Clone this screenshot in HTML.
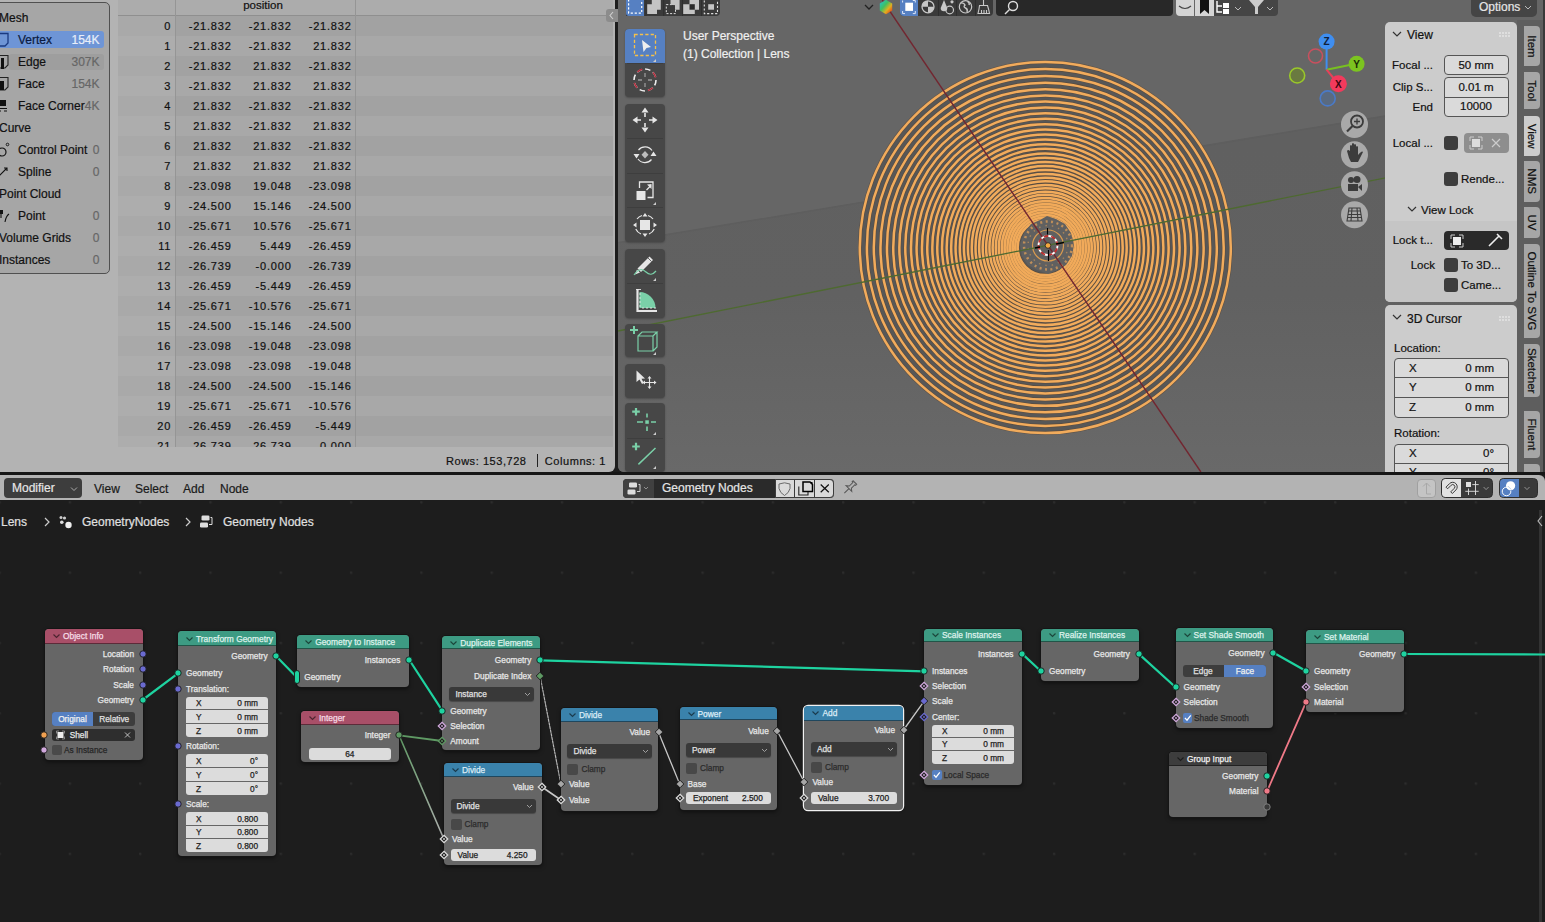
<!DOCTYPE html>
<html><head><meta charset="utf-8"><style>
html,body{margin:0;padding:0;}
body{width:1545px;height:922px;overflow:hidden;position:relative;background:#1d1d1d;font-family:"Liberation Sans", sans-serif;}
div{box-sizing:border-box;} svg{display:block;} div{-webkit-text-stroke-width:0.2px;} .ne div{-webkit-text-stroke-width:0.25px;}
</style></head><body>
<div style="position:absolute;left:0px;top:0px;width:615px;height:472px;background:#b3b3b3;overflow:hidden;border-bottom-right-radius:6px"></div><div style="position:absolute;left:118px;top:0px;width:495px;height:447px;overflow:hidden"><div style="position:absolute;left:0px;top:0px;width:495px;height:15.5px;background:#acacac;border-bottom:1px solid #8f8f8f;box-sizing:border-box"></div><div style="position:absolute;left:-55.0px;top:-2.0px;width:400px;text-align:center;line-height:14px;font-size:11.5px;color:#111;white-space:nowrap;">position</div><div style="position:absolute;left:0px;top:15.5px;width:57px;height:20px;background:#a9a9a9"></div><div style="position:absolute;left:57px;top:15.5px;width:438px;height:20px;background:#a2a2a2"></div><div style="position:absolute;left:-0.7999999999999972px;width:54px;text-align:right;top:18.5px;line-height:14px;font-size:11px;color:#111;white-space:nowrap;letter-spacing:0.8px">0</div><div style="position:absolute;left:56.599999999999994px;width:57px;text-align:right;top:18.5px;line-height:14px;font-size:11px;color:#111;white-space:nowrap;letter-spacing:0.8px">-21.832</div><div style="position:absolute;left:116.6px;width:57px;text-align:right;top:18.5px;line-height:14px;font-size:11px;color:#111;white-space:nowrap;letter-spacing:0.8px">-21.832</div><div style="position:absolute;left:176.6px;width:57px;text-align:right;top:18.5px;line-height:14px;font-size:11px;color:#111;white-space:nowrap;letter-spacing:0.8px">-21.832</div><div style="position:absolute;left:0px;top:35.5px;width:57px;height:20px;background:#adadad"></div><div style="position:absolute;left:57px;top:35.5px;width:438px;height:20px;background:#a8a8a8"></div><div style="position:absolute;left:-0.7999999999999972px;width:54px;text-align:right;top:38.5px;line-height:14px;font-size:11px;color:#111;white-space:nowrap;letter-spacing:0.8px">1</div><div style="position:absolute;left:56.599999999999994px;width:57px;text-align:right;top:38.5px;line-height:14px;font-size:11px;color:#111;white-space:nowrap;letter-spacing:0.8px">-21.832</div><div style="position:absolute;left:116.6px;width:57px;text-align:right;top:38.5px;line-height:14px;font-size:11px;color:#111;white-space:nowrap;letter-spacing:0.8px">-21.832</div><div style="position:absolute;left:176.6px;width:57px;text-align:right;top:38.5px;line-height:14px;font-size:11px;color:#111;white-space:nowrap;letter-spacing:0.8px">21.832</div><div style="position:absolute;left:0px;top:55.5px;width:57px;height:20px;background:#a9a9a9"></div><div style="position:absolute;left:57px;top:55.5px;width:438px;height:20px;background:#a2a2a2"></div><div style="position:absolute;left:-0.7999999999999972px;width:54px;text-align:right;top:58.5px;line-height:14px;font-size:11px;color:#111;white-space:nowrap;letter-spacing:0.8px">2</div><div style="position:absolute;left:56.599999999999994px;width:57px;text-align:right;top:58.5px;line-height:14px;font-size:11px;color:#111;white-space:nowrap;letter-spacing:0.8px">-21.832</div><div style="position:absolute;left:116.6px;width:57px;text-align:right;top:58.5px;line-height:14px;font-size:11px;color:#111;white-space:nowrap;letter-spacing:0.8px">21.832</div><div style="position:absolute;left:176.6px;width:57px;text-align:right;top:58.5px;line-height:14px;font-size:11px;color:#111;white-space:nowrap;letter-spacing:0.8px">-21.832</div><div style="position:absolute;left:0px;top:75.5px;width:57px;height:20px;background:#adadad"></div><div style="position:absolute;left:57px;top:75.5px;width:438px;height:20px;background:#a8a8a8"></div><div style="position:absolute;left:-0.7999999999999972px;width:54px;text-align:right;top:78.5px;line-height:14px;font-size:11px;color:#111;white-space:nowrap;letter-spacing:0.8px">3</div><div style="position:absolute;left:56.599999999999994px;width:57px;text-align:right;top:78.5px;line-height:14px;font-size:11px;color:#111;white-space:nowrap;letter-spacing:0.8px">-21.832</div><div style="position:absolute;left:116.6px;width:57px;text-align:right;top:78.5px;line-height:14px;font-size:11px;color:#111;white-space:nowrap;letter-spacing:0.8px">21.832</div><div style="position:absolute;left:176.6px;width:57px;text-align:right;top:78.5px;line-height:14px;font-size:11px;color:#111;white-space:nowrap;letter-spacing:0.8px">21.832</div><div style="position:absolute;left:0px;top:95.5px;width:57px;height:20px;background:#a9a9a9"></div><div style="position:absolute;left:57px;top:95.5px;width:438px;height:20px;background:#a2a2a2"></div><div style="position:absolute;left:-0.7999999999999972px;width:54px;text-align:right;top:98.5px;line-height:14px;font-size:11px;color:#111;white-space:nowrap;letter-spacing:0.8px">4</div><div style="position:absolute;left:56.599999999999994px;width:57px;text-align:right;top:98.5px;line-height:14px;font-size:11px;color:#111;white-space:nowrap;letter-spacing:0.8px">21.832</div><div style="position:absolute;left:116.6px;width:57px;text-align:right;top:98.5px;line-height:14px;font-size:11px;color:#111;white-space:nowrap;letter-spacing:0.8px">-21.832</div><div style="position:absolute;left:176.6px;width:57px;text-align:right;top:98.5px;line-height:14px;font-size:11px;color:#111;white-space:nowrap;letter-spacing:0.8px">-21.832</div><div style="position:absolute;left:0px;top:115.5px;width:57px;height:20px;background:#adadad"></div><div style="position:absolute;left:57px;top:115.5px;width:438px;height:20px;background:#a8a8a8"></div><div style="position:absolute;left:-0.7999999999999972px;width:54px;text-align:right;top:118.5px;line-height:14px;font-size:11px;color:#111;white-space:nowrap;letter-spacing:0.8px">5</div><div style="position:absolute;left:56.599999999999994px;width:57px;text-align:right;top:118.5px;line-height:14px;font-size:11px;color:#111;white-space:nowrap;letter-spacing:0.8px">21.832</div><div style="position:absolute;left:116.6px;width:57px;text-align:right;top:118.5px;line-height:14px;font-size:11px;color:#111;white-space:nowrap;letter-spacing:0.8px">-21.832</div><div style="position:absolute;left:176.6px;width:57px;text-align:right;top:118.5px;line-height:14px;font-size:11px;color:#111;white-space:nowrap;letter-spacing:0.8px">21.832</div><div style="position:absolute;left:0px;top:135.5px;width:57px;height:20px;background:#a9a9a9"></div><div style="position:absolute;left:57px;top:135.5px;width:438px;height:20px;background:#a2a2a2"></div><div style="position:absolute;left:-0.7999999999999972px;width:54px;text-align:right;top:138.5px;line-height:14px;font-size:11px;color:#111;white-space:nowrap;letter-spacing:0.8px">6</div><div style="position:absolute;left:56.599999999999994px;width:57px;text-align:right;top:138.5px;line-height:14px;font-size:11px;color:#111;white-space:nowrap;letter-spacing:0.8px">21.832</div><div style="position:absolute;left:116.6px;width:57px;text-align:right;top:138.5px;line-height:14px;font-size:11px;color:#111;white-space:nowrap;letter-spacing:0.8px">21.832</div><div style="position:absolute;left:176.6px;width:57px;text-align:right;top:138.5px;line-height:14px;font-size:11px;color:#111;white-space:nowrap;letter-spacing:0.8px">-21.832</div><div style="position:absolute;left:0px;top:155.5px;width:57px;height:20px;background:#adadad"></div><div style="position:absolute;left:57px;top:155.5px;width:438px;height:20px;background:#a8a8a8"></div><div style="position:absolute;left:-0.7999999999999972px;width:54px;text-align:right;top:158.5px;line-height:14px;font-size:11px;color:#111;white-space:nowrap;letter-spacing:0.8px">7</div><div style="position:absolute;left:56.599999999999994px;width:57px;text-align:right;top:158.5px;line-height:14px;font-size:11px;color:#111;white-space:nowrap;letter-spacing:0.8px">21.832</div><div style="position:absolute;left:116.6px;width:57px;text-align:right;top:158.5px;line-height:14px;font-size:11px;color:#111;white-space:nowrap;letter-spacing:0.8px">21.832</div><div style="position:absolute;left:176.6px;width:57px;text-align:right;top:158.5px;line-height:14px;font-size:11px;color:#111;white-space:nowrap;letter-spacing:0.8px">21.832</div><div style="position:absolute;left:0px;top:175.5px;width:57px;height:20px;background:#a9a9a9"></div><div style="position:absolute;left:57px;top:175.5px;width:438px;height:20px;background:#a2a2a2"></div><div style="position:absolute;left:-0.7999999999999972px;width:54px;text-align:right;top:178.5px;line-height:14px;font-size:11px;color:#111;white-space:nowrap;letter-spacing:0.8px">8</div><div style="position:absolute;left:56.599999999999994px;width:57px;text-align:right;top:178.5px;line-height:14px;font-size:11px;color:#111;white-space:nowrap;letter-spacing:0.8px">-23.098</div><div style="position:absolute;left:116.6px;width:57px;text-align:right;top:178.5px;line-height:14px;font-size:11px;color:#111;white-space:nowrap;letter-spacing:0.8px">19.048</div><div style="position:absolute;left:176.6px;width:57px;text-align:right;top:178.5px;line-height:14px;font-size:11px;color:#111;white-space:nowrap;letter-spacing:0.8px">-23.098</div><div style="position:absolute;left:0px;top:195.5px;width:57px;height:20px;background:#adadad"></div><div style="position:absolute;left:57px;top:195.5px;width:438px;height:20px;background:#a8a8a8"></div><div style="position:absolute;left:-0.7999999999999972px;width:54px;text-align:right;top:198.5px;line-height:14px;font-size:11px;color:#111;white-space:nowrap;letter-spacing:0.8px">9</div><div style="position:absolute;left:56.599999999999994px;width:57px;text-align:right;top:198.5px;line-height:14px;font-size:11px;color:#111;white-space:nowrap;letter-spacing:0.8px">-24.500</div><div style="position:absolute;left:116.6px;width:57px;text-align:right;top:198.5px;line-height:14px;font-size:11px;color:#111;white-space:nowrap;letter-spacing:0.8px">15.146</div><div style="position:absolute;left:176.6px;width:57px;text-align:right;top:198.5px;line-height:14px;font-size:11px;color:#111;white-space:nowrap;letter-spacing:0.8px">-24.500</div><div style="position:absolute;left:0px;top:215.5px;width:57px;height:20px;background:#a9a9a9"></div><div style="position:absolute;left:57px;top:215.5px;width:438px;height:20px;background:#a2a2a2"></div><div style="position:absolute;left:-0.7999999999999972px;width:54px;text-align:right;top:218.5px;line-height:14px;font-size:11px;color:#111;white-space:nowrap;letter-spacing:0.8px">10</div><div style="position:absolute;left:56.599999999999994px;width:57px;text-align:right;top:218.5px;line-height:14px;font-size:11px;color:#111;white-space:nowrap;letter-spacing:0.8px">-25.671</div><div style="position:absolute;left:116.6px;width:57px;text-align:right;top:218.5px;line-height:14px;font-size:11px;color:#111;white-space:nowrap;letter-spacing:0.8px">10.576</div><div style="position:absolute;left:176.6px;width:57px;text-align:right;top:218.5px;line-height:14px;font-size:11px;color:#111;white-space:nowrap;letter-spacing:0.8px">-25.671</div><div style="position:absolute;left:0px;top:235.5px;width:57px;height:20px;background:#adadad"></div><div style="position:absolute;left:57px;top:235.5px;width:438px;height:20px;background:#a8a8a8"></div><div style="position:absolute;left:-0.7999999999999972px;width:54px;text-align:right;top:238.5px;line-height:14px;font-size:11px;color:#111;white-space:nowrap;letter-spacing:0.8px">11</div><div style="position:absolute;left:56.599999999999994px;width:57px;text-align:right;top:238.5px;line-height:14px;font-size:11px;color:#111;white-space:nowrap;letter-spacing:0.8px">-26.459</div><div style="position:absolute;left:116.6px;width:57px;text-align:right;top:238.5px;line-height:14px;font-size:11px;color:#111;white-space:nowrap;letter-spacing:0.8px">5.449</div><div style="position:absolute;left:176.6px;width:57px;text-align:right;top:238.5px;line-height:14px;font-size:11px;color:#111;white-space:nowrap;letter-spacing:0.8px">-26.459</div><div style="position:absolute;left:0px;top:255.5px;width:57px;height:20px;background:#a9a9a9"></div><div style="position:absolute;left:57px;top:255.5px;width:438px;height:20px;background:#a2a2a2"></div><div style="position:absolute;left:-0.7999999999999972px;width:54px;text-align:right;top:258.5px;line-height:14px;font-size:11px;color:#111;white-space:nowrap;letter-spacing:0.8px">12</div><div style="position:absolute;left:56.599999999999994px;width:57px;text-align:right;top:258.5px;line-height:14px;font-size:11px;color:#111;white-space:nowrap;letter-spacing:0.8px">-26.739</div><div style="position:absolute;left:116.6px;width:57px;text-align:right;top:258.5px;line-height:14px;font-size:11px;color:#111;white-space:nowrap;letter-spacing:0.8px">-0.000</div><div style="position:absolute;left:176.6px;width:57px;text-align:right;top:258.5px;line-height:14px;font-size:11px;color:#111;white-space:nowrap;letter-spacing:0.8px">-26.739</div><div style="position:absolute;left:0px;top:275.5px;width:57px;height:20px;background:#adadad"></div><div style="position:absolute;left:57px;top:275.5px;width:438px;height:20px;background:#a8a8a8"></div><div style="position:absolute;left:-0.7999999999999972px;width:54px;text-align:right;top:278.5px;line-height:14px;font-size:11px;color:#111;white-space:nowrap;letter-spacing:0.8px">13</div><div style="position:absolute;left:56.599999999999994px;width:57px;text-align:right;top:278.5px;line-height:14px;font-size:11px;color:#111;white-space:nowrap;letter-spacing:0.8px">-26.459</div><div style="position:absolute;left:116.6px;width:57px;text-align:right;top:278.5px;line-height:14px;font-size:11px;color:#111;white-space:nowrap;letter-spacing:0.8px">-5.449</div><div style="position:absolute;left:176.6px;width:57px;text-align:right;top:278.5px;line-height:14px;font-size:11px;color:#111;white-space:nowrap;letter-spacing:0.8px">-26.459</div><div style="position:absolute;left:0px;top:295.5px;width:57px;height:20px;background:#a9a9a9"></div><div style="position:absolute;left:57px;top:295.5px;width:438px;height:20px;background:#a2a2a2"></div><div style="position:absolute;left:-0.7999999999999972px;width:54px;text-align:right;top:298.5px;line-height:14px;font-size:11px;color:#111;white-space:nowrap;letter-spacing:0.8px">14</div><div style="position:absolute;left:56.599999999999994px;width:57px;text-align:right;top:298.5px;line-height:14px;font-size:11px;color:#111;white-space:nowrap;letter-spacing:0.8px">-25.671</div><div style="position:absolute;left:116.6px;width:57px;text-align:right;top:298.5px;line-height:14px;font-size:11px;color:#111;white-space:nowrap;letter-spacing:0.8px">-10.576</div><div style="position:absolute;left:176.6px;width:57px;text-align:right;top:298.5px;line-height:14px;font-size:11px;color:#111;white-space:nowrap;letter-spacing:0.8px">-25.671</div><div style="position:absolute;left:0px;top:315.5px;width:57px;height:20px;background:#adadad"></div><div style="position:absolute;left:57px;top:315.5px;width:438px;height:20px;background:#a8a8a8"></div><div style="position:absolute;left:-0.7999999999999972px;width:54px;text-align:right;top:318.5px;line-height:14px;font-size:11px;color:#111;white-space:nowrap;letter-spacing:0.8px">15</div><div style="position:absolute;left:56.599999999999994px;width:57px;text-align:right;top:318.5px;line-height:14px;font-size:11px;color:#111;white-space:nowrap;letter-spacing:0.8px">-24.500</div><div style="position:absolute;left:116.6px;width:57px;text-align:right;top:318.5px;line-height:14px;font-size:11px;color:#111;white-space:nowrap;letter-spacing:0.8px">-15.146</div><div style="position:absolute;left:176.6px;width:57px;text-align:right;top:318.5px;line-height:14px;font-size:11px;color:#111;white-space:nowrap;letter-spacing:0.8px">-24.500</div><div style="position:absolute;left:0px;top:335.5px;width:57px;height:20px;background:#a9a9a9"></div><div style="position:absolute;left:57px;top:335.5px;width:438px;height:20px;background:#a2a2a2"></div><div style="position:absolute;left:-0.7999999999999972px;width:54px;text-align:right;top:338.5px;line-height:14px;font-size:11px;color:#111;white-space:nowrap;letter-spacing:0.8px">16</div><div style="position:absolute;left:56.599999999999994px;width:57px;text-align:right;top:338.5px;line-height:14px;font-size:11px;color:#111;white-space:nowrap;letter-spacing:0.8px">-23.098</div><div style="position:absolute;left:116.6px;width:57px;text-align:right;top:338.5px;line-height:14px;font-size:11px;color:#111;white-space:nowrap;letter-spacing:0.8px">-19.048</div><div style="position:absolute;left:176.6px;width:57px;text-align:right;top:338.5px;line-height:14px;font-size:11px;color:#111;white-space:nowrap;letter-spacing:0.8px">-23.098</div><div style="position:absolute;left:0px;top:355.5px;width:57px;height:20px;background:#adadad"></div><div style="position:absolute;left:57px;top:355.5px;width:438px;height:20px;background:#a8a8a8"></div><div style="position:absolute;left:-0.7999999999999972px;width:54px;text-align:right;top:358.5px;line-height:14px;font-size:11px;color:#111;white-space:nowrap;letter-spacing:0.8px">17</div><div style="position:absolute;left:56.599999999999994px;width:57px;text-align:right;top:358.5px;line-height:14px;font-size:11px;color:#111;white-space:nowrap;letter-spacing:0.8px">-23.098</div><div style="position:absolute;left:116.6px;width:57px;text-align:right;top:358.5px;line-height:14px;font-size:11px;color:#111;white-space:nowrap;letter-spacing:0.8px">-23.098</div><div style="position:absolute;left:176.6px;width:57px;text-align:right;top:358.5px;line-height:14px;font-size:11px;color:#111;white-space:nowrap;letter-spacing:0.8px">-19.048</div><div style="position:absolute;left:0px;top:375.5px;width:57px;height:20px;background:#a9a9a9"></div><div style="position:absolute;left:57px;top:375.5px;width:438px;height:20px;background:#a2a2a2"></div><div style="position:absolute;left:-0.7999999999999972px;width:54px;text-align:right;top:378.5px;line-height:14px;font-size:11px;color:#111;white-space:nowrap;letter-spacing:0.8px">18</div><div style="position:absolute;left:56.599999999999994px;width:57px;text-align:right;top:378.5px;line-height:14px;font-size:11px;color:#111;white-space:nowrap;letter-spacing:0.8px">-24.500</div><div style="position:absolute;left:116.6px;width:57px;text-align:right;top:378.5px;line-height:14px;font-size:11px;color:#111;white-space:nowrap;letter-spacing:0.8px">-24.500</div><div style="position:absolute;left:176.6px;width:57px;text-align:right;top:378.5px;line-height:14px;font-size:11px;color:#111;white-space:nowrap;letter-spacing:0.8px">-15.146</div><div style="position:absolute;left:0px;top:395.5px;width:57px;height:20px;background:#adadad"></div><div style="position:absolute;left:57px;top:395.5px;width:438px;height:20px;background:#a8a8a8"></div><div style="position:absolute;left:-0.7999999999999972px;width:54px;text-align:right;top:398.5px;line-height:14px;font-size:11px;color:#111;white-space:nowrap;letter-spacing:0.8px">19</div><div style="position:absolute;left:56.599999999999994px;width:57px;text-align:right;top:398.5px;line-height:14px;font-size:11px;color:#111;white-space:nowrap;letter-spacing:0.8px">-25.671</div><div style="position:absolute;left:116.6px;width:57px;text-align:right;top:398.5px;line-height:14px;font-size:11px;color:#111;white-space:nowrap;letter-spacing:0.8px">-25.671</div><div style="position:absolute;left:176.6px;width:57px;text-align:right;top:398.5px;line-height:14px;font-size:11px;color:#111;white-space:nowrap;letter-spacing:0.8px">-10.576</div><div style="position:absolute;left:0px;top:415.5px;width:57px;height:20px;background:#a9a9a9"></div><div style="position:absolute;left:57px;top:415.5px;width:438px;height:20px;background:#a2a2a2"></div><div style="position:absolute;left:-0.7999999999999972px;width:54px;text-align:right;top:418.5px;line-height:14px;font-size:11px;color:#111;white-space:nowrap;letter-spacing:0.8px">20</div><div style="position:absolute;left:56.599999999999994px;width:57px;text-align:right;top:418.5px;line-height:14px;font-size:11px;color:#111;white-space:nowrap;letter-spacing:0.8px">-26.459</div><div style="position:absolute;left:116.6px;width:57px;text-align:right;top:418.5px;line-height:14px;font-size:11px;color:#111;white-space:nowrap;letter-spacing:0.8px">-26.459</div><div style="position:absolute;left:176.6px;width:57px;text-align:right;top:418.5px;line-height:14px;font-size:11px;color:#111;white-space:nowrap;letter-spacing:0.8px">-5.449</div><div style="position:absolute;left:0px;top:435.5px;width:57px;height:20px;background:#adadad"></div><div style="position:absolute;left:57px;top:435.5px;width:438px;height:20px;background:#a8a8a8"></div><div style="position:absolute;left:-0.7999999999999972px;width:54px;text-align:right;top:438.5px;line-height:14px;font-size:11px;color:#111;white-space:nowrap;letter-spacing:0.8px">21</div><div style="position:absolute;left:56.599999999999994px;width:57px;text-align:right;top:438.5px;line-height:14px;font-size:11px;color:#111;white-space:nowrap;letter-spacing:0.8px">-26.739</div><div style="position:absolute;left:116.6px;width:57px;text-align:right;top:438.5px;line-height:14px;font-size:11px;color:#111;white-space:nowrap;letter-spacing:0.8px">-26.739</div><div style="position:absolute;left:176.6px;width:57px;text-align:right;top:438.5px;line-height:14px;font-size:11px;color:#111;white-space:nowrap;letter-spacing:0.8px">0.000</div><div style="position:absolute;left:57px;top:0px;width:1px;height:447px;background:#959595"></div><div style="position:absolute;left:237px;top:0px;width:1px;height:447px;background:#959595"></div></div><div style="position:absolute;left:406.5px;width:120px;text-align:right;top:453.5px;line-height:14px;font-size:11px;color:#111;white-space:nowrap;letter-spacing:0.55px">Rows: 153,728</div><div style="position:absolute;left:537px;top:454px;width:1.3px;height:12.5px;background:#222"></div><div style="position:absolute;left:486px;width:120px;text-align:right;top:453.5px;line-height:14px;font-size:11px;color:#111;white-space:nowrap;letter-spacing:0.55px">Columns: 1</div><div style="position:absolute;left:0px;top:0px;width:115px;height:280px;overflow:hidden"><div style="position:absolute;left:-6px;top:2px;width:115.5px;height:272px;background:#a6a6a6;border:1px solid #505050;border-radius:5px;box-sizing:border-box"></div><div style="position:absolute;left:-1px;top:11.0px;line-height:14px;font-size:12px;color:#111;white-space:nowrap;">Mesh</div><div style="position:absolute;left:-2px;top:31px;width:106px;height:17px;background:#6e95d6;border-radius:3px"></div><div style="position:absolute;left:18px;top:33.0px;line-height:14px;font-size:12px;color:#0a1a40;white-space:nowrap;">Vertex</div><div style="position:absolute;left:59.5px;width:40px;text-align:right;top:33.0px;line-height:14px;font-size:12px;color:#e8eefa;white-space:nowrap;">154K</div><div style="position:absolute;left:9px;top:53.5px;width:95px;height:16.5px;background:#9e9e9e;border-radius:3px"></div><div style="position:absolute;left:18px;top:55.0px;line-height:14px;font-size:12px;color:#111;white-space:nowrap;">Edge</div><div style="position:absolute;left:59.5px;width:40px;text-align:right;top:55.0px;line-height:14px;font-size:12px;color:#666;white-space:nowrap;">307K</div><div style="position:absolute;left:18px;top:77.0px;line-height:14px;font-size:12px;color:#111;white-space:nowrap;">Face</div><div style="position:absolute;left:59.5px;width:40px;text-align:right;top:77.0px;line-height:14px;font-size:12px;color:#666;white-space:nowrap;">154K</div><div style="position:absolute;left:18px;top:99.0px;line-height:14px;font-size:12px;color:#111;white-space:nowrap;">Face Corner</div><div style="position:absolute;left:59.5px;width:40px;text-align:right;top:99.0px;line-height:14px;font-size:12px;color:#666;white-space:nowrap;">4K</div><div style="position:absolute;left:-1px;top:121.0px;line-height:14px;font-size:12px;color:#111;white-space:nowrap;">Curve</div><div style="position:absolute;left:18px;top:143.0px;line-height:14px;font-size:12px;color:#111;white-space:nowrap;">Control Point</div><div style="position:absolute;left:59.5px;width:40px;text-align:right;top:143.0px;line-height:14px;font-size:12px;color:#666;white-space:nowrap;">0</div><div style="position:absolute;left:18px;top:165.0px;line-height:14px;font-size:12px;color:#111;white-space:nowrap;">Spline</div><div style="position:absolute;left:59.5px;width:40px;text-align:right;top:165.0px;line-height:14px;font-size:12px;color:#666;white-space:nowrap;">0</div><div style="position:absolute;left:-1px;top:187.0px;line-height:14px;font-size:12px;color:#111;white-space:nowrap;">Point Cloud</div><div style="position:absolute;left:18px;top:209.0px;line-height:14px;font-size:12px;color:#111;white-space:nowrap;">Point</div><div style="position:absolute;left:59.5px;width:40px;text-align:right;top:209.0px;line-height:14px;font-size:12px;color:#666;white-space:nowrap;">0</div><div style="position:absolute;left:-1px;top:231.0px;line-height:14px;font-size:12px;color:#111;white-space:nowrap;">Volume Grids</div><div style="position:absolute;left:59.5px;width:40px;text-align:right;top:231.0px;line-height:14px;font-size:12px;color:#666;white-space:nowrap;">0</div><div style="position:absolute;left:-1px;top:253.0px;line-height:14px;font-size:12px;color:#111;white-space:nowrap;">Instances</div><div style="position:absolute;left:59.5px;width:40px;text-align:right;top:253.0px;line-height:14px;font-size:12px;color:#666;white-space:nowrap;">0</div><svg width="20" height="280" style="position:absolute;left:0;top:0">
<path d="M-3,33.5 L8,33.5 L8,43 L5,46 L-3,46" fill="none" stroke="#1a3a80" stroke-width="1.3"/>
<path d="M-3,55.5 L8,55.5 L8,65 L5,68 L-3,68" fill="none" stroke="#222" stroke-width="1.1"/><rect x="1" y="58" width="3" height="11" fill="#111"/>
<path d="M-3,77.5 L8,77.5 L8,87 L5,90 L-3,90" fill="none" stroke="#222" stroke-width="1.1"/><rect x="-3" y="81" width="7" height="9" fill="#111"/>
<rect x="0" y="100" width="6" height="6" fill="#111"/><path d="M-1,108.5 L7,108.5 M-1,111 L1,111 M4,111 L7,111" stroke="#111" stroke-width="1"/>
<circle cx="2" cy="152" r="4" fill="none" stroke="#111" stroke-width="1.2"/><circle cx="7.5" cy="144.5" r="1.3" fill="none" stroke="#111" stroke-width="0.9"/>
<path d="M-1,176 L7,168 M4,168 L7,168 L7,171" fill="none" stroke="#111" stroke-width="1.1"/>
<rect x="-1" y="210" width="4" height="4" fill="#111"/><path d="M1,214 L1,218 M5,222 Q6,216 9,214" fill="none" stroke="#111" stroke-width="1.1"/>
</svg></div><div style="position:absolute;left:606px;top:9px;width:12px;height:13px;background:#8c8c8c;border-radius:3px 0 0 3px"><svg width="12" height="13"><polyline points="7,3 4,6.5 7,10" fill="none" stroke="#d0d0d0" stroke-width="1.1"/></svg></div><div style="position:absolute;left:618px;top:0px;width:927px;height:472px;overflow:hidden;border-bottom-left-radius:6px;border-top-left-radius:0"><div style="position:absolute;left:0px;top:0px;width:927px;height:472px;background:#666666"></div><svg width="927" height="472" style="position:absolute;left:0;top:0"><defs><linearGradient id="vpg" x1="0" y1="150" x2="0" y2="472" gradientUnits="userSpaceOnUse"><stop offset="0" stop-color="#606060"/><stop offset="0.45" stop-color="#616161"/><stop offset="1" stop-color="#696969"/></linearGradient></defs><polygon points="0,242.2 927,89 927,472 0,472" fill="url(#vpg)"/><line x1="0" y1="242.7" x2="927" y2="89.5" stroke="#5e5e5e" stroke-width="1.5"/></svg></div><svg width="1545" height="472" style="position:absolute;left:0;top:0">
<circle cx="1045.3" cy="247.5" r="185" fill="#575757"/>
<g fill="none" stroke="#5a4028" stroke-width="3.6" opacity="0.5"><circle cx="1045.3" cy="247.5" r="185.50" /><circle cx="1045.3" cy="247.5" r="178.40" /><circle cx="1045.3" cy="247.5" r="171.51" /><circle cx="1045.3" cy="247.5" r="164.83" /><circle cx="1045.3" cy="247.5" r="158.34" /><circle cx="1045.3" cy="247.5" r="152.05" /><circle cx="1045.3" cy="247.5" r="145.95" /><circle cx="1045.3" cy="247.5" r="140.03" /><circle cx="1045.3" cy="247.5" r="134.29" /><circle cx="1045.3" cy="247.5" r="128.72" /><circle cx="1045.3" cy="247.5" r="123.32" /><circle cx="1045.3" cy="247.5" r="118.07" /><circle cx="1045.3" cy="247.5" r="112.99" /><circle cx="1045.3" cy="247.5" r="108.06" /><circle cx="1045.3" cy="247.5" r="103.27" /><circle cx="1045.3" cy="247.5" r="98.63" /><circle cx="1045.3" cy="247.5" r="94.12" /><circle cx="1045.3" cy="247.5" r="89.75" /><circle cx="1045.3" cy="247.5" r="85.52" /><circle cx="1045.3" cy="247.5" r="81.40" /><circle cx="1045.3" cy="247.5" r="77.41" /><circle cx="1045.3" cy="247.5" r="73.54" /><circle cx="1045.3" cy="247.5" r="69.79" /><circle cx="1045.3" cy="247.5" r="66.15" /><circle cx="1045.3" cy="247.5" r="62.62" /><circle cx="1045.3" cy="247.5" r="59.19" /><circle cx="1045.3" cy="247.5" r="55.86" /><circle cx="1045.3" cy="247.5" r="52.64" /><circle cx="1045.3" cy="247.5" r="49.51" /><circle cx="1045.3" cy="247.5" r="46.47" /><circle cx="1045.3" cy="247.5" r="43.53" /><circle cx="1045.3" cy="247.5" r="40.67" /><circle cx="1045.3" cy="247.5" r="37.90" /><circle cx="1045.3" cy="247.5" r="35.21" /><circle cx="1045.3" cy="247.5" r="32.61" /><circle cx="1045.3" cy="247.5" r="30.08" /><circle cx="1045.3" cy="247.5" r="27.62" /></g>
<g fill="none" stroke="#f1ab5c" stroke-width="2.5"><circle cx="1045.3" cy="247.5" r="185.50" /><circle cx="1045.3" cy="247.5" r="178.40" /><circle cx="1045.3" cy="247.5" r="171.51" /><circle cx="1045.3" cy="247.5" r="164.83" /><circle cx="1045.3" cy="247.5" r="158.34" /><circle cx="1045.3" cy="247.5" r="152.05" /><circle cx="1045.3" cy="247.5" r="145.95" /><circle cx="1045.3" cy="247.5" r="140.03" /><circle cx="1045.3" cy="247.5" r="134.29" /><circle cx="1045.3" cy="247.5" r="128.72" /><circle cx="1045.3" cy="247.5" r="123.32" /><circle cx="1045.3" cy="247.5" r="118.07" /><circle cx="1045.3" cy="247.5" r="112.99" /><circle cx="1045.3" cy="247.5" r="108.06" /><circle cx="1045.3" cy="247.5" r="103.27" /><circle cx="1045.3" cy="247.5" r="98.63" /><circle cx="1045.3" cy="247.5" r="94.12" /><circle cx="1045.3" cy="247.5" r="89.75" /><circle cx="1045.3" cy="247.5" r="85.52" /><circle cx="1045.3" cy="247.5" r="81.40" /><circle cx="1045.3" cy="247.5" r="77.41" /><circle cx="1045.3" cy="247.5" r="73.54" /><circle cx="1045.3" cy="247.5" r="69.79" /><circle cx="1045.3" cy="247.5" r="66.15" /><circle cx="1045.3" cy="247.5" r="62.62" /><circle cx="1045.3" cy="247.5" r="59.19" /><circle cx="1045.3" cy="247.5" r="55.86" /><circle cx="1045.3" cy="247.5" r="52.64" /><circle cx="1045.3" cy="247.5" r="49.51" /><circle cx="1045.3" cy="247.5" r="46.47" /><circle cx="1045.3" cy="247.5" r="43.53" /><circle cx="1045.3" cy="247.5" r="40.67" /><circle cx="1045.3" cy="247.5" r="37.90" /><circle cx="1045.3" cy="247.5" r="35.21" /><circle cx="1045.3" cy="247.5" r="32.61" /><circle cx="1045.3" cy="247.5" r="30.08" /><circle cx="1045.3" cy="247.5" r="27.62" /></g>
<circle cx="1047.5" cy="246" r="37" fill="none" stroke="#f0a855" stroke-width="16" opacity="0.35"/>
<polygon points="1024,233 1031,224 1040,220 1047,216 1056,219 1065,224 1071,233 1074,245 1072,256 1066,265 1058,270 1048,274 1037,270 1028,265 1022,256 1020,245" fill="#606060"/>
<circle cx="1048" cy="245.5" r="24" fill="none" stroke="#e8a458" stroke-width="2.5" stroke-dasharray="2 3.5" opacity="0.7"/>
<circle cx="1048" cy="245.5" r="20" fill="none" stroke="#e8a458" stroke-width="1.5" stroke-dasharray="1.5 5" opacity="0.5"/>
<circle cx="1048" cy="245.5" r="15.5" fill="none" stroke="#d89a50" stroke-width="1.2"/>
<line x1="882.3" y1="0" x2="1200.9" y2="472" stroke="#722630" stroke-width="1.4"/>
<line x1="618" y1="331" x2="1545" y2="146" stroke="#4e6a30" stroke-width="1.3"/>
<circle cx="1048" cy="245.5" r="9.5" fill="none" stroke="#fff" stroke-width="1.8" stroke-dasharray="4.5 2.95"/>
<circle cx="1048" cy="245.5" r="9.5" fill="none" stroke="#c03030" stroke-width="1.8" stroke-dasharray="4.5 2.95" stroke-dashoffset="4.5"/>
<line x1="1047.5" y1="228" x2="1047.5" y2="234.5" stroke="#000" stroke-width="1.1"/>
<line x1="1048.5" y1="250" x2="1048.5" y2="261" stroke="#000" stroke-width="1.1"/>
<line x1="1035" y1="248" x2="1040" y2="247" stroke="#000" stroke-width="1.3"/>
<line x1="1056" y1="244" x2="1064" y2="242.5" stroke="#000" stroke-width="1.3"/>
<circle cx="1048" cy="245.5" r="2.8" fill="#f5a840" stroke="#222" stroke-width="0.8"/>
</svg><svg width="100" height="18" style="position:absolute;left:622px;top:0"><path d="M4,0 L98,0 L98,12 Q98,16 94,16 L4,16 Q4,16 4,16 Z" fill="#3a3a3a"/><path d="M4,0 L22,0 L22,16 L7,16 Q4,16 4,13 Z" fill="#5680c2"/><rect x="6.6" y="-1" width="13.1" height="14.1" fill="none" stroke="#fff" stroke-width="1.2" stroke-dasharray="2.2 1.8"/><path d="M24,0 L24,16 M41.7,0 L41.7,16 M60.5,0 L60.5,16 M79.5,0 L79.5,16" stroke="#2e2e2e" stroke-width="1"/><path d="M25.2,4.2 L29.8,4.2 L29.8,0 L38.8,0 L38.8,9.7 L35,9.7 L35,13.9 L25.2,13.9 Z" fill="#c4c4c4"/><rect x="44.3" y="4.6" width="9.2" height="9" fill="none" stroke="#ddd" stroke-width="1" stroke-dasharray="2 1.6"/><path d="M48.5,0 L57.6,0 L57.6,9.7 L53,9.7 L53,4.9 L48.5,4.9 Z" fill="#c4c4c4"/><path d="M67.5,0 L77,0 L77,9.7 L72.8,9.7 L72.8,13.9 L61.2,13.9 L61.2,4.2 L67.5,4.2 Z" fill="#c4c4c4"/><rect x="67.5" y="4.2" width="5.3" height="5.5" fill="#2a2a2a"/><rect x="82.3" y="-1" width="13.2" height="14.6" fill="none" stroke="#ddd" stroke-width="1.1" stroke-dasharray="2.2 1.8"/><rect x="86.2" y="4.2" width="5.8" height="5.5" fill="#c4c4c4"/></svg><svg width="20" height="12" style="position:absolute;left:862px;top:2px"><polyline points="3,3 7,7 11,3" fill="none" stroke="#222" stroke-width="1.3"/></svg><svg width="16" height="16" style="position:absolute;left:878px;top:-1px"><defs><linearGradient id="hexg" x1="0" y1="0" x2="1" y2="1"><stop offset="0" stop-color="#20c0e0"/><stop offset="0.4" stop-color="#40c060"/><stop offset="0.65" stop-color="#e0b020"/><stop offset="1" stop-color="#f02010"/></linearGradient></defs><polygon points="8,0.8 14.2,4.4 14.2,11.6 8,15.2 1.8,11.6 1.8,4.4" fill="url(#hexg)"/></svg><svg width="96" height="17" style="position:absolute;left:899px;top:0"><path d="M1,0 L94,0 L94,12 Q94,16 90,16 L5,16 Q1,16 1,12 Z" fill="#3a3a3a"/><path d="M1,0 L19,0 L19,16 L5,16 Q1,16 1,12 Z" fill="#5680c2"/><rect x="6.3" y="2.7" width="7.7" height="8.2" fill="#fff"/><path d="M3.6,2.5 L3.6,0.5 M13.8,0.5 L16.3,0.5 L16.3,2.5 M16.3,11 L16.3,13.6 L13.8,13.6 M6,13.6 L3.6,13.6 L3.6,11" fill="none" stroke="#dde6f8" stroke-width="1"/><path d="M39.5,0 L39.5,16 M57.5,0 L57.5,16 M76.5,0 L76.5,16" stroke="#2e2e2e" stroke-width="1"/><circle cx="29" cy="6.8" r="6" fill="none" stroke="#c8c8c8" stroke-width="1.3"/><path d="M29,6.8 L35,6.8 A6,6 0 0 1 29,12.8 Z M29,6.8 L23,6.8 A6,6 0 0 1 29,0.8 Z" fill="#c8c8c8"/><path d="M45,0 L48.3,8 A3.3,3.3 0 0 1 41.7,8 Z" fill="#c8c8c8"/><circle cx="50.7" cy="10" r="3.8" fill="none" stroke="#c8c8c8" stroke-width="1.2"/><circle cx="53" cy="1.8" r="1.6" fill="#c8c8c8"/><circle cx="66.5" cy="6.8" r="6.2" fill="none" stroke="#c8c8c8" stroke-width="1.2"/><path d="M62,3 Q65,2.5 66,5 Q64,7 66.5,8 Q69,9 68,12 M68.5,1.5 Q71,3 70,5" fill="none" stroke="#c8c8c8" stroke-width="1.4"/><path d="M84.5,0 L84.5,5 M80.5,5.5 L88.5,5.5 L89.5,9 L90.5,13.5 L79,13.5 L80,9 Z M82.5,10 L82.5,13.5 M85,10 L85,13.5 M87.5,10 L87.5,13.5" fill="none" stroke="#c8c8c8" stroke-width="1.1"/></svg><div style="position:absolute;left:996px;top:0px;width:177px;height:16px;background:#282828;border-radius:0 0 4px 4px"><svg width="20" height="16" style="position:absolute;left:6px;top:0"><circle cx="11" cy="6" r="4.5" fill="none" stroke="#ddd" stroke-width="1.4"/><line x1="7.5" y1="9.5" x2="3" y2="14" stroke="#ddd" stroke-width="1.4"/></svg></div><div style="position:absolute;left:1176px;top:0px;width:18px;height:16px;background:#d4d4d4;border-radius:0 0 0 4px"><svg width="18" height="16"><path d="M3,6 Q9,11 15,6" fill="none" stroke="#444" stroke-width="1.2"/></svg></div><div style="position:absolute;left:1195px;top:0px;width:19px;height:16px;background:#d4d4d4"><svg width="19" height="16"><path d="M5,0 L14,0 L14,14 L9.5,10 L5,14 Z" fill="#111"/></svg></div><div style="position:absolute;left:1214px;top:0px;width:64px;height:16px;background:#454545;border-radius:0 0 4px 0"><svg width="64" height="16"><path d="M3,1 L3,12 L8,12 M3,6 L8,6" fill="none" stroke="#fff" stroke-width="1.4"/><rect x="9" y="3" width="6" height="5" fill="#fff"/><rect x="9" y="9" width="6" height="5" fill="#fff"/><polyline points="21,7 24,10 27,7" fill="none" stroke="#bbb" stroke-width="1"/><path d="M35,0 L50,0 L44,7 L44,14 L41,14 L41,7 Z" fill="#ccc"/><polyline points="53,7 56,10 59,7" fill="none" stroke="#bbb" stroke-width="1"/></svg></div><div style="position:absolute;left:683px;top:29.0px;line-height:14px;font-size:12px;color:#f0f0f0;white-space:nowrap;">User Perspective</div><div style="position:absolute;left:683px;top:47.0px;line-height:14px;font-size:12px;color:#f0f0f0;white-space:nowrap;">(1) Collection | Lens</div><div style="position:absolute;left:625px;top:28.5px;width:40px;height:68.5px;background:#474747;border-radius:4px;box-shadow:0 1px 2px rgba(0,0,0,0.25)"></div><div style="position:absolute;left:627px;top:62.75px;width:36px;height:1px;background:#3e3e3e"></div><div style="position:absolute;left:625px;top:28.5px;width:40px;height:34px;background:#5680c2;border-radius:4px 4px 0 0"></div><div style="position:absolute;left:625px;top:103.5px;width:40px;height:138.5px;background:#474747;border-radius:4px;box-shadow:0 1px 2px rgba(0,0,0,0.25)"></div><div style="position:absolute;left:627px;top:138.125px;width:36px;height:1px;background:#3e3e3e"></div><div style="position:absolute;left:627px;top:172.75px;width:36px;height:1px;background:#3e3e3e"></div><div style="position:absolute;left:627px;top:207.375px;width:36px;height:1px;background:#3e3e3e"></div><div style="position:absolute;left:625px;top:248.5px;width:40px;height:69.5px;background:#474747;border-radius:4px;box-shadow:0 1px 2px rgba(0,0,0,0.25)"></div><div style="position:absolute;left:627px;top:283.25px;width:36px;height:1px;background:#3e3e3e"></div><div style="position:absolute;left:625px;top:323.5px;width:40px;height:33.5px;background:#474747;border-radius:4px;box-shadow:0 1px 2px rgba(0,0,0,0.25)"></div><div style="position:absolute;left:625px;top:363.5px;width:40px;height:34.0px;background:#474747;border-radius:4px;box-shadow:0 1px 2px rgba(0,0,0,0.25)"></div><div style="position:absolute;left:625px;top:403px;width:40px;height:69px;background:#474747;border-radius:4px;box-shadow:0 1px 2px rgba(0,0,0,0.25)"></div><div style="position:absolute;left:627px;top:437.5px;width:36px;height:1px;background:#3e3e3e"></div><svg width="50" height="471" style="position:absolute;left:620px;top:0">
<rect x="14.5" y="34.5" width="21" height="21" fill="none" stroke="#f5c04a" stroke-width="1.3" stroke-dasharray="3.2 2.2"/>
<path d="M22,40 L31,47 L26.5,48 L23.5,52 Z" fill="#eee"/>
<circle cx="25" cy="80" r="11" fill="none" stroke="#eee" stroke-width="1.6" stroke-dasharray="5.5 3.1"/>
<circle cx="25" cy="80" r="11" fill="none" stroke="#b02a3a" stroke-width="1.6" stroke-dasharray="5.5 11.8" stroke-dashoffset="-8.6"/>
<path d="M25,73 L25,77 M25,83 L25,87 M18,80 L22,80 M28,80 L32,80" stroke="#999" stroke-width="1.3"/>
<path d="M25,113 L25,117 M25,123 L25,127 M17,120 L21,120 M29,120 L33,120" stroke="#e6e6e6" stroke-width="1.6"/>
<path d="M25,107.5 L21.5,112.5 L28.5,112.5 Z M25,132.5 L21.5,127.5 L28.5,127.5 Z M12.5,120 L17.5,116.5 L17.5,123.5 Z M37.5,120 L32.5,116.5 L32.5,123.5 Z" fill="#e6e6e6"/>
<path d="M18.5,150 A8.5,8.5 0 0 1 32,150.5 M31.5,159.5 A8.5,8.5 0 0 1 18,159" fill="none" stroke="#e6e6e6" stroke-width="1.2"/>
<path d="M25,151 L28.5,154.8 L25,158.6 L21.5,154.8 Z" fill="#bdbdbd"/><path d="M13.5,154 L19.5,154 L16.5,158.5 Z M36.5,156 L30.5,156 L33.5,151.5 Z" fill="#e6e6e6"/>
<rect x="16.5" y="191" width="9" height="9" fill="#e6e6e6"/><path d="M19.5,188 L19.5,182 L33,182 L33,197.5 L27.5,197.5" fill="none" stroke="#e6e6e6" stroke-width="1.3"/><path d="M26.5,190 L31,185.5" stroke="#e6e6e6" stroke-width="1.2"/><path d="M31.5,184 L31.5,189 L27,184.5 Z" fill="#e6e6e6"/>
<path d="M36,202 L36,205 L33,205 Z" fill="#ccc"/>
<path d="M17,219 A9.5,9.5 0 0 1 22,215.5 M28,215.5 A9.5,9.5 0 0 1 33,219 M34.2,229 A9.5,9.5 0 0 1 29,234 M21,234 A9.5,9.5 0 0 1 15.8,229" fill="none" stroke="#e6e6e6" stroke-width="1.2"/>
<rect x="20" y="220" width="10" height="10" fill="#e6e6e6"/>
<path d="M25,213 L22.5,216.5 L27.5,216.5 Z M25,237 L22.5,233.5 L27.5,233.5 Z M13,225 L16.5,222.5 L16.5,227.5 Z M37,225 L33.5,222.5 L33.5,227.5 Z" fill="#e6e6e6"/>
<path d="M36,59 L36,62 L33,62 Z" fill="#ccc"/>
<path d="M17.5,268.5 L29.5,256.5 L33,260 L21,272 Z" fill="#e6e6e6"/><path d="M17,269.5 L20,272.5 L15,274.5 Z" fill="#e6e6e6"/><path d="M28,258 L31.5,261.5" stroke="#474747" stroke-width="0.8"/>
<path d="M14,275 Q20,266 26,272 Q31,277 36,271" fill="none" stroke="#7ad0a8" stroke-width="1.2"/>
<path d="M19.5,308 L19.5,292 A16,16 0 0 1 35.5,308 Z" fill="#7ad0a8"/><path d="M17.5,289 L17.5,311 L37,311" fill="none" stroke="#e6e6e6" stroke-width="2.2"/><path d="M16,289.5 L21,289.5 M19,294 L21,294 M19,298 L21,298 M19,302 L21,302 M19,306 L21,306 M23,309 L23,307 M27,309 L27,307 M31,309 L31,307 M35,309 L35,307" stroke="#e6e6e6" stroke-width="0.9"/>
<path d="M14,334 L14,326 M10,330 L18,330" stroke="#7ad0a8" stroke-width="2"/><path d="M18,336 L33,336 L33,351 L18,351 Z M18,336 L22,332 L37,332 L33,336 M37,332 L37,347 L33,351" fill="none" stroke="#7ad0a8" stroke-width="1.2"/>
<path d="M16.5,370.5 L16.5,382 L19.5,379.5 L22,384 L23.8,383 L21.5,378.8 L25,378.5 Z" fill="#e6e6e6"/>
<path d="M29.5,378 L29.5,387 M24.5,382.5 L34.5,382.5" stroke="#e6e6e6" stroke-width="1.1"/><path d="M29.5,376 L27.5,378.5 L31.5,378.5 Z M29.5,389 L27.5,386.5 L31.5,386.5 Z M22.5,382.5 L25,380.5 L25,384.5 Z M36.5,382.5 L34,380.5 L34,384.5 Z" fill="#e6e6e6"/>
<path d="M16,408 L16,415.5 M12.2,411.7 L19.8,411.7" stroke="#7ad0a8" stroke-width="2.2"/><rect x="25.3" y="420.3" width="3.5" height="3.5" fill="#7ad0a8"/><path d="M17,422 L23,422 M31,422 L36,422 M27,413.5 L27,417.5 M27,426.5 L27,431" stroke="#7ad0a8" stroke-width="1.6"/>
<path d="M36,278 L36,281 L33,281 Z M36,352 L36,355 L33,355 Z M36,432 L36,435 L33,435 Z M36,466 L36,469 L33,469 Z" fill="#ccc"/>
<path d="M16,442.8 L16,450.3 M12.2,446.5 L19.8,446.5" stroke="#7ad0a8" stroke-width="2.2"/><path d="M18.4,464.4 L35.5,448" stroke="#7ad0a8" stroke-width="1.5"/>
</svg><svg width="100" height="120" style="position:absolute;left:1280px;top:20px" font-family="Liberation Sans" font-weight="bold" font-size="10">
<g transform="translate(-1280,-20)">
<circle cx="1315.5" cy="56" r="7" fill="none" stroke="#c8505e" stroke-width="1.6"/>
<circle cx="1297.2" cy="75.5" r="7.5" fill="#6a7a40" stroke="#9ac82a" stroke-width="1.6"/>
<circle cx="1327.7" cy="98.4" r="7.5" fill="#5a6a80" stroke="#4a7ac8" stroke-width="1.6"/>
<line x1="1326.6" y1="69.7" x2="1326.6" y2="44" stroke="#3f8ef0" stroke-width="2"/>
<line x1="1326.6" y1="69.7" x2="1352" y2="64.5" stroke="#78c020" stroke-width="2"/>
<line x1="1326.6" y1="69.7" x2="1335" y2="80" stroke="#e8405a" stroke-width="2"/>
<circle cx="1326.6" cy="41.6" r="8" fill="#3f8ef0"/><text x="1326.6" y="45.3" text-anchor="middle" fill="#10203a">Z</text>
<circle cx="1356.6" cy="63.8" r="8" fill="#7cc420"/><text x="1356.6" y="67.5" text-anchor="middle" fill="#1a2a06">Y</text>
<circle cx="1338.4" cy="83.8" r="8.5" fill="#f23a5c"/><text x="1338.4" y="87.5" text-anchor="middle" fill="#3a0610">X</text>
</g></svg><svg width="40" height="130" style="position:absolute;left:1334px;top:108px"><g transform="translate(-1334,-108)"><circle cx="1354.5" cy="124.4" r="13.5" fill="#a9a9a9"/><circle cx="1354.5" cy="154.8" r="13.5" fill="#a9a9a9"/><circle cx="1354.5" cy="184.7" r="13.5" fill="#a9a9a9"/><circle cx="1354.5" cy="214.7" r="13.5" fill="#a9a9a9"/><circle cx="1357" cy="121.5" r="6" fill="none" stroke="#3c3c3c" stroke-width="1.8"/><path d="M1357,118.5 L1357,124.5 M1354,121.5 L1360,121.5" stroke="#3c3c3c" stroke-width="1.3"/><line x1="1352.5" y1="126" x2="1347" y2="131.5" stroke="#3c3c3c" stroke-width="2.2"/><path d="M1349,158 L1347,151 Q1348,149 1350,151 L1350,146 Q1351,144 1352,146 L1352,144 Q1353,142 1354,144 L1354,145 Q1355,143 1356,145 L1356,147 Q1357,145 1358,147 L1358,155 Q1362,150 1363,152 L1358,162 L1351,162 Z" fill="#3c3c3c"/><circle cx="1351" cy="180" r="3" fill="#3c3c3c"/><circle cx="1357" cy="179.5" r="3.5" fill="#3c3c3c"/><rect x="1348" y="184" width="10" height="7" fill="#3c3c3c"/><path d="M1358,187 L1362,184 L1362,191 Z" fill="#3c3c3c"/><path d="M1347,221 L1349,208 L1360,208 L1362,221 Z M1348,214.5 L1361,214.5 M1348,217.5 L1361.5,217.5 M1352,208 L1351,221 M1357,208 L1358,221 M1348.5,211 L1360.5,211" fill="none" stroke="#3c3c3c" stroke-width="1.1"/></g></svg><div style="position:absolute;left:0px;top:0px;width:1545px;height:472px;overflow:hidden"><div style="position:absolute;left:1517px;top:20px;width:28px;height:452px;background:#5e5e5e"></div><div style="position:absolute;left:1543px;top:0px;width:2px;height:472px;background:#3a3a3a"></div><div style="position:absolute;left:1524px;top:25.5px;width:16px;height:40.900000000000006px;background:#a6a6a6;border-radius:0 4px 4px 0;overflow:hidden"><div style="position:absolute;left:16px;top:0;width:40.900000000000006px;height:16px;transform-origin:0 0;transform:rotate(90deg);text-align:center;font-size:11.5px;line-height:16px;color:#111;white-space:nowrap">Item</div></div><div style="position:absolute;left:1524px;top:71.6px;width:16px;height:37.7px;background:#a6a6a6;border-radius:0 4px 4px 0;overflow:hidden"><div style="position:absolute;left:16px;top:0;width:37.7px;height:16px;transform-origin:0 0;transform:rotate(90deg);text-align:center;font-size:11.5px;line-height:16px;color:#111;white-space:nowrap">Tool</div></div><div style="position:absolute;left:1524px;top:115.8px;width:16px;height:40.39999999999999px;background:#cccccc;border-radius:0 4px 4px 0;overflow:hidden"><div style="position:absolute;left:16px;top:0;width:40.39999999999999px;height:16px;transform-origin:0 0;transform:rotate(90deg);text-align:center;font-size:11.5px;line-height:16px;color:#111;white-space:nowrap">View</div></div><div style="position:absolute;left:1524px;top:161.4px;width:16px;height:40.29999999999998px;background:#a6a6a6;border-radius:0 4px 4px 0;overflow:hidden"><div style="position:absolute;left:16px;top:0;width:40.29999999999998px;height:16px;transform-origin:0 0;transform:rotate(90deg);text-align:center;font-size:11.5px;line-height:16px;color:#111;white-space:nowrap">NMS</div></div><div style="position:absolute;left:1524px;top:207px;width:16px;height:31px;background:#a6a6a6;border-radius:0 4px 4px 0;overflow:hidden"><div style="position:absolute;left:16px;top:0;width:31px;height:16px;transform-origin:0 0;transform:rotate(90deg);text-align:center;font-size:11.5px;line-height:16px;color:#111;white-space:nowrap">UV</div></div><div style="position:absolute;left:1524px;top:244px;width:16px;height:94px;background:#a6a6a6;border-radius:0 4px 4px 0;overflow:hidden"><div style="position:absolute;left:16px;top:0;width:94px;height:16px;transform-origin:0 0;transform:rotate(90deg);text-align:center;font-size:11.5px;line-height:16px;color:#111;white-space:nowrap">Outline To SVG</div></div><div style="position:absolute;left:1524px;top:344px;width:16px;height:53.39999999999998px;background:#a6a6a6;border-radius:0 4px 4px 0;overflow:hidden"><div style="position:absolute;left:16px;top:0;width:53.39999999999998px;height:16px;transform-origin:0 0;transform:rotate(90deg);text-align:center;font-size:11.5px;line-height:16px;color:#111;white-space:nowrap">Sketcher</div></div><div style="position:absolute;left:1524px;top:411px;width:16px;height:47px;background:#a6a6a6;border-radius:0 4px 4px 0;overflow:hidden"><div style="position:absolute;left:16px;top:0;width:47px;height:16px;transform-origin:0 0;transform:rotate(90deg);text-align:center;font-size:11.5px;line-height:16px;color:#111;white-space:nowrap">Fluent</div></div><div style="position:absolute;left:1524px;top:464px;width:16px;height:16px;background:#a6a6a6;border-radius:0 4px 4px 0;overflow:hidden"><div style="position:absolute;left:16px;top:0;width:16px;height:16px;transform-origin:0 0;transform:rotate(90deg);text-align:center;font-size:11.5px;line-height:16px;color:#111;white-space:nowrap"></div></div><div style="position:absolute;left:1385px;top:22px;width:132px;height:280px;background:#cccccc;border-radius:5px"></div><div style="position:absolute;left:1385px;top:221px;width:132px;height:81px;background:#c5c5c5;border-radius:0 0 5px 5px"></div><svg width="12" height="10" style="position:absolute;left:1391px;top:30px"><polyline points="2,2 6,6 10,2" fill="none" stroke="#333" stroke-width="1.2"/></svg><div style="position:absolute;left:1407px;top:28.0px;line-height:14px;font-size:12px;color:#111;white-space:nowrap;">View</div><svg width="12" height="6" style="position:absolute;left:1499px;top:32px"><g fill="#fff"><circle cx="1" cy="1" r=".7"/><circle cx="4" cy="1" r=".7"/><circle cx="7" cy="1" r=".7"/><circle cx="10" cy="1" r=".7"/><circle cx="1" cy="4" r=".7"/><circle cx="4" cy="4" r=".7"/><circle cx="7" cy="4" r=".7"/><circle cx="10" cy="4" r=".7"/></g></svg><div style="position:absolute;left:1373px;width:60px;text-align:right;top:58.0px;line-height:14px;font-size:11.5px;color:#111;white-space:nowrap;">Focal ...</div><div style="position:absolute;left:1444px;top:55px;width:65px;height:20px;background:#dadada;border:1px solid #555;border-radius:4px"></div><div style="position:absolute;left:1446.0px;top:58.0px;width:60px;text-align:center;line-height:14px;font-size:11.5px;color:#111;white-space:nowrap;">50 mm</div><div style="position:absolute;left:1373px;width:60px;text-align:right;top:80.0px;line-height:14px;font-size:11.5px;color:#111;white-space:nowrap;">Clip S...</div><div style="position:absolute;left:1373px;width:60px;text-align:right;top:100.0px;line-height:14px;font-size:11.5px;color:#111;white-space:nowrap;">End</div><div style="position:absolute;left:1444px;top:77px;width:65px;height:40px;background:#dadada;border:1px solid #555;border-radius:4px"></div><div style="position:absolute;left:1445px;top:96.5px;width:63px;height:1px;background:#555"></div><div style="position:absolute;left:1446.0px;top:80.0px;width:60px;text-align:center;line-height:14px;font-size:11.5px;color:#111;white-space:nowrap;">0.01 m</div><div style="position:absolute;left:1446.0px;top:99.0px;width:60px;text-align:center;line-height:14px;font-size:11.5px;color:#111;white-space:nowrap;">10000</div><div style="position:absolute;left:1373px;width:60px;text-align:right;top:136.0px;line-height:14px;font-size:11.5px;color:#111;white-space:nowrap;">Local ...</div><div style="position:absolute;left:1444px;top:136px;width:14px;height:14px;background:#3d3d3d;border-radius:3px"></div><div style="position:absolute;left:1464px;top:133px;width:45px;height:20px;background:#8e8e8e;border-radius:4px"><svg width="45" height="20"><rect x="8" y="6" width="8" height="8" fill="#ddd"/><path d="M6,8 L6,4 L10,4 M14,4 L18,4 L18,8 M18,12 L18,16 L14,16 M10,16 L6,16 L6,12" fill="none" stroke="#ccc" stroke-width="1"/><path d="M28,6 L36,14 M36,6 L28,14" stroke="#ccc" stroke-width="1.2"/></svg></div><div style="position:absolute;left:1444px;top:172px;width:14px;height:14px;background:#3d3d3d;border-radius:3px"></div><div style="position:absolute;left:1461px;top:172.0px;line-height:14px;font-size:11.5px;color:#111;white-space:nowrap;">Rende...</div><svg width="12" height="10" style="position:absolute;left:1406px;top:205px"><polyline points="2,2 6,6 10,2" fill="none" stroke="#333" stroke-width="1.2"/></svg><div style="position:absolute;left:1421px;top:203.0px;line-height:14px;font-size:11.5px;color:#111;white-space:nowrap;">View Lock</div><div style="position:absolute;left:1373px;width:60px;text-align:right;top:233.0px;line-height:14px;font-size:11.5px;color:#111;white-space:nowrap;">Lock t...</div><div style="position:absolute;left:1444px;top:230.5px;width:65px;height:19px;background:#2a2a2a;border-radius:4px"><svg width="65" height="19"><rect x="9" y="6" width="8" height="8" fill="#eee"/><path d="M7,8 L7,4 L11,4 M15,4 L19,4 L19,8 M19,12 L19,16 L15,16 M11,16 L7,16 L7,12" fill="none" stroke="#ccc" stroke-width="1"/><path d="M45,15 L55,5 M53,3 L58,8" stroke="#eee" stroke-width="1.6"/></svg></div><div style="position:absolute;left:1375px;width:60px;text-align:right;top:258.0px;line-height:14px;font-size:11.5px;color:#111;white-space:nowrap;">Lock</div><div style="position:absolute;left:1444px;top:258px;width:14px;height:14px;background:#3d3d3d;border-radius:3px"></div><div style="position:absolute;left:1461px;top:258.0px;line-height:14px;font-size:11.5px;color:#111;white-space:nowrap;">To 3D...</div><div style="position:absolute;left:1444px;top:278px;width:14px;height:14px;background:#3d3d3d;border-radius:3px"></div><div style="position:absolute;left:1461px;top:278.0px;line-height:14px;font-size:11.5px;color:#111;white-space:nowrap;">Came...</div><div style="position:absolute;left:1385px;top:305px;width:132px;height:180px;background:#cccccc;border-radius:5px"></div><svg width="12" height="10" style="position:absolute;left:1391px;top:313px"><polyline points="2,2 6,6 10,2" fill="none" stroke="#333" stroke-width="1.2"/></svg><div style="position:absolute;left:1407px;top:311.5px;line-height:14px;font-size:12px;color:#111;white-space:nowrap;">3D Cursor</div><svg width="12" height="6" style="position:absolute;left:1499px;top:316px"><g fill="#fff"><circle cx="1" cy="1" r=".7"/><circle cx="4" cy="1" r=".7"/><circle cx="7" cy="1" r=".7"/><circle cx="10" cy="1" r=".7"/><circle cx="1" cy="4" r=".7"/><circle cx="4" cy="4" r=".7"/><circle cx="7" cy="4" r=".7"/><circle cx="10" cy="4" r=".7"/></g></svg><div style="position:absolute;left:1394px;top:341.0px;line-height:14px;font-size:11.5px;color:#111;white-space:nowrap;">Location:</div><div style="position:absolute;left:1393.5px;top:358px;width:115px;height:59.5px;background:#dadada;border:1px solid #555;border-radius:4px"></div><div style="position:absolute;left:1394px;top:377px;width:114px;height:1px;background:#555"></div><div style="position:absolute;left:1394px;top:397px;width:114px;height:1px;background:#555"></div><div style="position:absolute;left:1409px;top:360.5px;line-height:14px;font-size:11.5px;color:#111;white-space:nowrap;">X</div><div style="position:absolute;left:1434px;width:60px;text-align:right;top:360.5px;line-height:14px;font-size:11.5px;color:#111;white-space:nowrap;">0 mm</div><div style="position:absolute;left:1409px;top:380.0px;line-height:14px;font-size:11.5px;color:#111;white-space:nowrap;">Y</div><div style="position:absolute;left:1434px;width:60px;text-align:right;top:380.0px;line-height:14px;font-size:11.5px;color:#111;white-space:nowrap;">0 mm</div><div style="position:absolute;left:1409px;top:400.0px;line-height:14px;font-size:11.5px;color:#111;white-space:nowrap;">Z</div><div style="position:absolute;left:1434px;width:60px;text-align:right;top:400.0px;line-height:14px;font-size:11.5px;color:#111;white-space:nowrap;">0 mm</div><div style="position:absolute;left:1394px;top:426.0px;line-height:14px;font-size:11.5px;color:#111;white-space:nowrap;">Rotation:</div><div style="position:absolute;left:1393.5px;top:443.5px;width:115px;height:40px;background:#dadada;border:1px solid #555;border-radius:4px"></div><div style="position:absolute;left:1394px;top:462.5px;width:114px;height:1px;background:#555"></div><div style="position:absolute;left:1409px;top:446.0px;line-height:14px;font-size:11.5px;color:#111;white-space:nowrap;">X</div><div style="position:absolute;left:1434px;width:60px;text-align:right;top:446.0px;line-height:14px;font-size:11.5px;color:#111;white-space:nowrap;">0°</div><div style="position:absolute;left:1409px;top:465.0px;line-height:14px;font-size:11.5px;color:#111;white-space:nowrap;">Y</div><div style="position:absolute;left:1434px;width:60px;text-align:right;top:465.0px;line-height:14px;font-size:11.5px;color:#111;white-space:nowrap;">0°</div></div><div style="position:absolute;left:1471px;top:0px;width:66px;height:17px;background:#454545;border-radius:0 0 5px 5px"><div style="position:absolute;left:8px;top:0.0px;line-height:14px;font-size:12px;color:#e6e6e6;white-space:nowrap;">Options</div><svg width="12" height="10" style="position:absolute;left:52px;top:3px"><polyline points="2,3 5,6 8,3" fill="none" stroke="#bbb" stroke-width="1"/></svg></div><div style="position:absolute;left:0px;top:472px;width:1545px;height:3px;background:#161616"></div><div style="position:absolute;left:0px;top:475px;width:1545px;height:447px;background:#1d1d1d"></div><svg width="1545" height="422" style="position:absolute;left:0;top:500px"><defs><pattern id="dg" width="70.3" height="70.3" patternUnits="userSpaceOnUse" x="68.7" y="1.2"><circle cx="1.2" cy="1.2" r="1.3" fill="#2c2c2c"/></pattern></defs><rect width="1545" height="422" fill="url(#dg)"/></svg><div style="position:absolute;left:0px;top:475px;width:1545px;height:25px;background:#b3b3b3;border-radius:0 6px 0 0"></div><div style="position:absolute;left:4px;top:478px;width:78px;height:20px;background:#3d3d3d;border-radius:4px"><div style="position:absolute;left:8px;top:3.0px;line-height:14px;font-size:12px;color:#e6e6e6;white-space:nowrap;">Modifier</div><svg width="10" height="8" style="position:absolute;left:66px;top:8px"><polyline points="1,1.5 4,4.5 7,1.5" fill="none" stroke="#aaa" stroke-width="1"/></svg></div><div style="position:absolute;left:94px;top:481.5px;line-height:14px;font-size:12px;color:#1a1a1a;white-space:nowrap;">View</div><div style="position:absolute;left:135px;top:481.5px;line-height:14px;font-size:12px;color:#1a1a1a;white-space:nowrap;">Select</div><div style="position:absolute;left:183px;top:481.5px;line-height:14px;font-size:12px;color:#1a1a1a;white-space:nowrap;">Add</div><div style="position:absolute;left:220px;top:481.5px;line-height:14px;font-size:12px;color:#1a1a1a;white-space:nowrap;">Node</div><div style="position:absolute;left:623px;top:478.5px;width:211px;height:19px;background:#2a2a2a;border-radius:4px;overflow:hidden"><div style="position:absolute;left:0px;top:0px;width:31px;height:19px;background:#404040"></div><svg width="31" height="19" style="position:absolute;left:0;top:0"><rect x="6" y="3.5" width="8" height="5" rx="1.3" fill="#ddd"/><rect x="4.5" y="10.5" width="8" height="5" rx="1.3" fill="#ddd"/><path d="M15.5,5.5 L17,5.5 L17,12.5 L14,12.5" fill="none" stroke="#ddd" stroke-width="0.9"/><polyline points="21,8 23,10 25,8" fill="none" stroke="#999" stroke-width="0.9"/></svg><div style="position:absolute;left:39px;top:2.5px;line-height:14px;font-size:12px;color:#e6e6e6;white-space:nowrap;">Geometry Nodes</div><div style="position:absolute;left:152px;top:0px;width:59px;height:19px;background:#dadada;border:1px solid #3c3c3c;border-radius:0 4px 4px 0"></div><svg width="59" height="19" style="position:absolute;left:152px;top:0"><path d="M4,5 Q9.5,2.6 15,5 L15,9.5 Q14,14 9.5,16.5 Q5,14 4,9.5 Z" fill="none" stroke="#6a6a6a" stroke-width="1"/><line x1="19.5" y1="0" x2="19.5" y2="19" stroke="#3c3c3c" stroke-width="1"/><path d="M23.8,7.5 L23.8,16 L33,16 L33,13" fill="none" stroke="#222" stroke-width="1.1"/><path d="M28,3 L35,3 L37.5,5.5 L37.5,12.5 L28,12.5 Z" fill="none" stroke="#000" stroke-width="1.5"/><path d="M35,3 L37.5,3 L37.5,5.5 Z" fill="#000"/><line x1="39.5" y1="0" x2="39.5" y2="19" stroke="#3c3c3c" stroke-width="1"/><path d="M45.7,5.5 L53.8,13.3 M53.8,5.5 L45.7,13.3" stroke="#111" stroke-width="1.2"/></svg></div><svg width="20" height="20" style="position:absolute;left:840px;top:478px"><g transform="rotate(45 10 9.5)"><path d="M7.5,2.5 L12.5,2.5 L12.5,4 L11.5,4 L11.5,9 L14,11 L6,11 L8.5,9 L8.5,4 L7.5,4 Z" fill="none" stroke="#555" stroke-width="1"/><line x1="10" y1="11" x2="10" y2="17.5" stroke="#555" stroke-width="1"/></g></svg><div style="position:absolute;left:1416.5px;top:478.5px;width:19px;height:19px;background:#c4c4c4;border:1px solid #a0a0a0;border-radius:4px"><svg width="17" height="17"><path d="M8.5,14 L8.5,3 M5,6.5 L8.5,3 L12,6.5 M8.5,14 L13,14" fill="none" stroke="#a8a8a8" stroke-width="1"/></svg></div><div style="position:absolute;left:1441px;top:478.2px;width:52px;height:19.4px;background:#3a3a3a;border-radius:4.5px;overflow:hidden;border:1px solid #2e2e2e"><div style="position:absolute;left:0px;top:0px;width:19px;height:19.4px;background:#e2e2e2"></div><svg width="52" height="20" style="position:absolute;left:-1px;top:-1px"><g transform="rotate(45 11 9.5)"><path d="M6.5,13.5 L6.5,8.5 A4.5,4.5 0 0 1 15.5,8.5 L15.5,13.5 L13.2,13.5 L13.2,8.5 A2.2,2.2 0 0 0 8.8,8.5 L8.8,13.5 Z" fill="none" stroke="#333" stroke-width="0.9"/></g><rect x="25" y="4" width="5" height="5" fill="#e0e0e0"/><path d="M34.5,3 L34.5,17 M27.5,10.5 L27.5,17 M31.3,6.6 L37.7,6.6 M24.3,13.3 L37.7,13.3" stroke="#e0e0e0" stroke-width="0.9"/><polyline points="42.6,9 45.1,11.6 47.6,9" fill="none" stroke="#999" stroke-width="0.9"/></svg></div><div style="position:absolute;left:1498.5px;top:478.2px;width:39.5px;height:19.4px;background:#3a3a3a;border-radius:4.5px;overflow:hidden;border:1px solid #2e2e2e"><div style="position:absolute;left:0px;top:0px;width:19px;height:19.4px;background:#5680c2"></div><svg width="40" height="20" style="position:absolute;left:-1px;top:-1px"><circle cx="11.6" cy="7.8" r="4.6" fill="#fff"/><path d="M8.6,9.3 A4.3,4.3 0 1 0 11.8,13" fill="none" stroke="#fff" stroke-width="1"/><path d="M9.3,8.5 L10.3,9.5 M11.3,10.5 L12,11.3" stroke="#5680c2" stroke-width="0.8"/><polyline points="25.5,9 28,11.6 30.5,9" fill="none" stroke="#999" stroke-width="0.9"/></svg></div><div style="position:absolute;left:1px;top:515.0px;line-height:14px;font-size:12px;color:#e0e0e0;white-space:nowrap;">Lens</div><svg width="8" height="10" style="position:absolute;left:43px;top:517px"><polyline points="2,1 6,5 2,9" fill="none" stroke="#ccc" stroke-width="1.2"/></svg><svg width="16" height="14" style="position:absolute;left:58px;top:515px"><circle cx="3" cy="2.5" r="1.5" fill="#ccc"/><circle cx="6.5" cy="3" r="1.6" fill="#ccc"/><circle cx="3.8" cy="7.2" r="1.8" fill="#ddd"/><circle cx="10.5" cy="10" r="3.2" fill="#eee"/></svg><div style="position:absolute;left:82px;top:515.0px;line-height:14px;font-size:12px;color:#e0e0e0;white-space:nowrap;">GeometryNodes</div><svg width="8" height="10" style="position:absolute;left:184px;top:517px"><polyline points="2,1 6,5 2,9" fill="none" stroke="#ccc" stroke-width="1.2"/></svg><svg width="16" height="16" style="position:absolute;left:199px;top:514px"><rect x="2.5" y="1.5" width="8" height="5" rx="1.3" fill="#ddd"/><rect x="1" y="8.5" width="8" height="5" rx="1.3" fill="#ddd"/><path d="M11.5,3.5 L13,3.5 L13,10.5 L10,10.5" fill="none" stroke="#ddd" stroke-width="1"/></svg><div style="position:absolute;left:223px;top:515.0px;line-height:14px;font-size:12px;color:#e0e0e0;white-space:nowrap;">Geometry Nodes</div><div style="position:absolute;left:1539px;top:510px;width:2.5px;height:412px;background:#333"></div><svg width="8" height="12" style="position:absolute;left:1536px;top:515px"><polyline points="6,1 2,6 6,11" fill="none" stroke="#bbb" stroke-width="1.1"/></svg><svg width="1545" height="922" style="position:absolute;left:0;top:0"><polyline points="142.5,700 178,673.4" fill="none" stroke="#1ed3a0" stroke-width="2.2" stroke-linecap="round"/><polyline points="276,656 296.5,677" fill="none" stroke="#1ed3a0" stroke-width="2.2" stroke-linecap="round"/><polyline points="409,659.5 442.3,710.6" fill="none" stroke="#1ed3a0" stroke-width="2.2" stroke-linecap="round"/><polyline points="540,660.3 924,671.3" fill="none" stroke="#1ed3a0" stroke-width="2.2" stroke-linecap="round"/><polyline points="1022,653.6 1041,671.3" fill="none" stroke="#1ed3a0" stroke-width="2.2" stroke-linecap="round"/><polyline points="1138.5,653.6 1175.6,687.2" fill="none" stroke="#1ed3a0" stroke-width="2.2" stroke-linecap="round"/><polyline points="1273.2,652.5 1306,671" fill="none" stroke="#1ed3a0" stroke-width="2.2" stroke-linecap="round"/><polyline points="1404,654 1545,654.5" fill="none" stroke="#1ed3a0" stroke-width="2.2" stroke-linecap="round"/><polyline points="399,735.3 442.3,741" fill="none" stroke="#5f9a64" stroke-width="1.8" stroke-linecap="round"/><defs><linearGradient id="ig" x1="399" y1="735" x2="444" y2="839" gradientUnits="userSpaceOnUse"><stop offset="0" stop-color="#5f9a64"/><stop offset="1" stop-color="#b0b0b0"/></linearGradient><linearGradient id="di" x1="540" y1="675" x2="561" y2="784" gradientUnits="userSpaceOnUse"><stop offset="0" stop-color="#6a9a6a"/><stop offset="1" stop-color="#bbbbbb"/></linearGradient><linearGradient id="gm" x1="1267" y1="791" x2="1306" y2="702" gradientUnits="userSpaceOnUse"><stop offset="0" stop-color="#f07a88"/><stop offset="1" stop-color="#f08a8a"/></linearGradient></defs><polyline points="399,735.3 444,839.2" fill="none" stroke="url(#ig)" stroke-width="1.6" stroke-linecap="round"/><polyline points="540,675.5 560.9,784.2" fill="none" stroke="#b8b8b8" stroke-width="1.2" stroke-linecap="round" stroke-dasharray="2.5 1.2"/><polyline points="542,787 560.9,800" fill="none" stroke="#c8c8c8" stroke-width="1.6" stroke-linecap="round"/><polyline points="658.5,732.3 679.5,783.5" fill="none" stroke="#c8c8c8" stroke-width="1.3" stroke-linecap="round"/><polyline points="777.3,731.3 804.4,782.2" fill="none" stroke="#c8c8c8" stroke-width="1.3" stroke-linecap="round"/><polyline points="903.5,730 924,701.4" fill="none" stroke="#c8c8c8" stroke-width="1.3" stroke-linecap="round"/><polyline points="1267,791.3 1306,702.3" fill="none" stroke="#f07a88" stroke-width="1.8" stroke-linecap="round"/></svg><div class="ne"><div style="position:absolute;left:45px;top:629px;width:97.5px;height:131px;background:#666666;border-radius:4px;box-shadow:0 0 0 1px #151515, 0 2px 4px rgba(0,0,0,0.5)"></div><div style="position:absolute;left:45px;top:629px;width:97.5px;height:14.5px;background:#a84f68;border-radius:4px 4px 0 0;border-bottom:1px solid rgba(0,0,0,0.45)"></div><svg width="10" height="8" style="position:absolute;left:52px;top:633.25px"><polyline points="1.5,1.5 4.5,4.5 7.5,1.5" fill="none" stroke="rgba(0,0,0,0.55)" stroke-width="1.2"/></svg><div style="position:absolute;left:63px;top:629.25px;line-height:14px;font-size:8.4px;color:#f6dce6;white-space:nowrap;">Object Info</div><div style="position:absolute;left:14.0px;width:120px;text-align:right;top:647.4px;line-height:14px;font-size:8.3px;color:#e8e8e8;white-space:nowrap;">Location</div><svg width="12" height="12" style="position:absolute;left:136.5px;top:648.4px"><circle cx="6" cy="6" r="3.2" fill="#6a6ad0" stroke="#1a1a1a" stroke-width="0.9"/></svg><div style="position:absolute;left:14.0px;width:120px;text-align:right;top:662.4px;line-height:14px;font-size:8.3px;color:#e8e8e8;white-space:nowrap;">Rotation</div><svg width="12" height="12" style="position:absolute;left:136.5px;top:663.4px"><circle cx="6" cy="6" r="3.2" fill="#6a6ad0" stroke="#1a1a1a" stroke-width="0.9"/></svg><div style="position:absolute;left:14.0px;width:120px;text-align:right;top:678.0px;line-height:14px;font-size:8.3px;color:#e8e8e8;white-space:nowrap;">Scale</div><svg width="12" height="12" style="position:absolute;left:136.5px;top:679px"><circle cx="6" cy="6" r="3.2" fill="#6a6ad0" stroke="#1a1a1a" stroke-width="0.9"/></svg><div style="position:absolute;left:14.0px;width:120px;text-align:right;top:693.3px;line-height:14px;font-size:8.3px;color:#e8e8e8;white-space:nowrap;">Geometry</div><svg width="12" height="12" style="position:absolute;left:136.5px;top:694.3px"><circle cx="6" cy="6" r="3.2" fill="#1ed3a0" stroke="#1a1a1a" stroke-width="0.9"/></svg><div style="position:absolute;left:51.7px;top:712px;width:83.5px;height:13.5px;background:#3d3d3d;border-radius:3px;overflow:hidden"><div style="position:absolute;left:0px;top:0px;width:41.5px;height:13.5px;background:#5680c2"></div><div style="position:absolute;left:0.0px;top:-0.25px;width:41.5px;text-align:center;line-height:14px;font-size:8.3px;color:#f0f0f0;white-space:nowrap;">Original</div><div style="position:absolute;left:41.75px;top:-0.25px;width:41.5px;text-align:center;line-height:14px;font-size:8.3px;color:#e0e0e0;white-space:nowrap;">Relative</div></div><div style="position:absolute;left:51.7px;top:728.5px;width:83.5px;height:12.5px;background:#2e2e2e;border-radius:3px"><svg width="83" height="12"><rect x="5.5" y="3" width="6" height="6" fill="#eee"/><path d="M4.5,4.5 L4.5,2 L7,2 M10,2 L12.5,2 L12.5,4.5 M12.5,7.5 L12.5,10 L10,10 M7,10 L4.5,10 L4.5,7.5" fill="none" stroke="#aaa" stroke-width="0.7"/><path d="M73,3.5 L78,8.5 M78,3.5 L73,8.5" stroke="#ccc" stroke-width="0.9"/></svg><div style="position:absolute;left:18px;top:-0.75px;line-height:14px;font-size:8.3px;color:#e6e6e6;white-space:nowrap;">Shell</div></div><svg width="12" height="12" style="position:absolute;left:38.4px;top:728.5px"><circle cx="6" cy="6" r="3.2" fill="#f0a050" stroke="#1a1a1a" stroke-width="0.9"/></svg><div style="position:absolute;left:51.5px;top:744.5px;width:10px;height:10px;background:#4a4a4a;border-radius:2px"></div><div style="position:absolute;left:64px;top:743.3px;line-height:14px;font-size:8.3px;color:#262626;white-space:nowrap;">As Instance</div><svg width="12" height="12" style="position:absolute;left:38.4px;top:744.3px"><circle cx="6" cy="6" r="3.2" fill="#d0a8dc" stroke="#1a1a1a" stroke-width="0.9"/></svg><div style="position:absolute;left:178px;top:631.4px;width:98.19999999999999px;height:224.60000000000002px;background:#666666;border-radius:4px;box-shadow:0 0 0 1px #151515, 0 2px 4px rgba(0,0,0,0.5)"></div><div style="position:absolute;left:178px;top:631.4px;width:98.19999999999999px;height:14.399999999999977px;background:#3d9b83;border-radius:4px 4px 0 0;border-bottom:1px solid rgba(0,0,0,0.45)"></div><svg width="10" height="8" style="position:absolute;left:185px;top:635.5999999999999px"><polyline points="1.5,1.5 4.5,4.5 7.5,1.5" fill="none" stroke="rgba(0,0,0,0.55)" stroke-width="1.2"/></svg><div style="position:absolute;left:196px;top:631.5999999999999px;line-height:14px;font-size:8.4px;color:#dff2ec;white-space:nowrap;">Transform Geometry</div><div style="position:absolute;left:147.7px;width:120px;text-align:right;top:649.0px;line-height:14px;font-size:8.3px;color:#e8e8e8;white-space:nowrap;">Geometry</div><svg width="12" height="12" style="position:absolute;left:270.2px;top:650px"><circle cx="6" cy="6" r="3.2" fill="#1ed3a0" stroke="#1a1a1a" stroke-width="0.9"/></svg><div style="position:absolute;left:186px;top:666.4px;line-height:14px;font-size:8.3px;color:#e8e8e8;white-space:nowrap;">Geometry</div><svg width="12" height="12" style="position:absolute;left:172px;top:667.4px"><circle cx="6" cy="6" r="3.2" fill="#1ed3a0" stroke="#1a1a1a" stroke-width="0.9"/></svg><div style="position:absolute;left:186px;top:682.4px;line-height:14px;font-size:8.3px;color:#e8e8e8;white-space:nowrap;">Translation:</div><svg width="12" height="12" style="position:absolute;left:172px;top:683.4px"><circle cx="6" cy="6" r="3.2" fill="#6a6ad0" stroke="#1a1a1a" stroke-width="0.9"/></svg><div style="position:absolute;left:186px;top:697px;width:82px;height:12px;background:#dcdcdc;border-radius:3px 3px 0 0"></div><div style="position:absolute;left:196px;top:696.0px;line-height:14px;font-size:8.3px;color:#222;white-space:nowrap;">X</div><div style="position:absolute;left:198px;width:60px;text-align:right;top:696.0px;line-height:14px;font-size:8.3px;color:#222;white-space:nowrap;">0 mm</div><div style="position:absolute;left:186px;top:710px;width:82px;height:13px;background:#dcdcdc;border-radius:0"></div><div style="position:absolute;left:196px;top:709.5px;line-height:14px;font-size:8.3px;color:#222;white-space:nowrap;">Y</div><div style="position:absolute;left:198px;width:60px;text-align:right;top:709.5px;line-height:14px;font-size:8.3px;color:#222;white-space:nowrap;">0 mm</div><div style="position:absolute;left:186px;top:724px;width:82px;height:13px;background:#dcdcdc;border-radius:0 0 3px 3px"></div><div style="position:absolute;left:196px;top:723.5px;line-height:14px;font-size:8.3px;color:#222;white-space:nowrap;">Z</div><div style="position:absolute;left:198px;width:60px;text-align:right;top:723.5px;line-height:14px;font-size:8.3px;color:#222;white-space:nowrap;">0 mm</div><div style="position:absolute;left:186px;top:739.4px;line-height:14px;font-size:8.3px;color:#e8e8e8;white-space:nowrap;">Rotation:</div><svg width="12" height="12" style="position:absolute;left:172px;top:740.4px"><circle cx="6" cy="6" r="3.2" fill="#6a6ad0" stroke="#1a1a1a" stroke-width="0.9"/></svg><div style="position:absolute;left:186px;top:754px;width:82px;height:13px;background:#dcdcdc;border-radius:3px 3px 0 0"></div><div style="position:absolute;left:196px;top:753.5px;line-height:14px;font-size:8.3px;color:#222;white-space:nowrap;">X</div><div style="position:absolute;left:198px;width:60px;text-align:right;top:753.5px;line-height:14px;font-size:8.3px;color:#222;white-space:nowrap;">0°</div><div style="position:absolute;left:186px;top:768px;width:82px;height:13px;background:#dcdcdc;border-radius:0"></div><div style="position:absolute;left:196px;top:767.5px;line-height:14px;font-size:8.3px;color:#222;white-space:nowrap;">Y</div><div style="position:absolute;left:198px;width:60px;text-align:right;top:767.5px;line-height:14px;font-size:8.3px;color:#222;white-space:nowrap;">0°</div><div style="position:absolute;left:186px;top:782px;width:82px;height:13px;background:#dcdcdc;border-radius:0 0 3px 3px"></div><div style="position:absolute;left:196px;top:781.5px;line-height:14px;font-size:8.3px;color:#222;white-space:nowrap;">Z</div><div style="position:absolute;left:198px;width:60px;text-align:right;top:781.5px;line-height:14px;font-size:8.3px;color:#222;white-space:nowrap;">0°</div><div style="position:absolute;left:186px;top:797.0px;line-height:14px;font-size:8.3px;color:#e8e8e8;white-space:nowrap;">Scale:</div><svg width="12" height="12" style="position:absolute;left:172px;top:798px"><circle cx="6" cy="6" r="3.2" fill="#6a6ad0" stroke="#1a1a1a" stroke-width="0.9"/></svg><div style="position:absolute;left:186px;top:812px;width:82px;height:13px;background:#dcdcdc;border-radius:3px 3px 0 0"></div><div style="position:absolute;left:196px;top:811.5px;line-height:14px;font-size:8.3px;color:#222;white-space:nowrap;">X</div><div style="position:absolute;left:198px;width:60px;text-align:right;top:811.5px;line-height:14px;font-size:8.3px;color:#222;white-space:nowrap;">0.800</div><div style="position:absolute;left:186px;top:826px;width:82px;height:12px;background:#dcdcdc;border-radius:0"></div><div style="position:absolute;left:196px;top:825.0px;line-height:14px;font-size:8.3px;color:#222;white-space:nowrap;">Y</div><div style="position:absolute;left:198px;width:60px;text-align:right;top:825.0px;line-height:14px;font-size:8.3px;color:#222;white-space:nowrap;">0.800</div><div style="position:absolute;left:186px;top:839px;width:82px;height:13px;background:#dcdcdc;border-radius:0 0 3px 3px"></div><div style="position:absolute;left:196px;top:838.5px;line-height:14px;font-size:8.3px;color:#222;white-space:nowrap;">Z</div><div style="position:absolute;left:198px;width:60px;text-align:right;top:838.5px;line-height:14px;font-size:8.3px;color:#222;white-space:nowrap;">0.800</div><div style="position:absolute;left:297.2px;top:635px;width:111.60000000000002px;height:52px;background:#666666;border-radius:4px;box-shadow:0 0 0 1px #151515, 0 2px 4px rgba(0,0,0,0.5)"></div><div style="position:absolute;left:297.2px;top:635px;width:111.60000000000002px;height:14.399999999999977px;background:#3d9b83;border-radius:4px 4px 0 0;border-bottom:1px solid rgba(0,0,0,0.45)"></div><svg width="10" height="8" style="position:absolute;left:304.2px;top:639.2px"><polyline points="1.5,1.5 4.5,4.5 7.5,1.5" fill="none" stroke="rgba(0,0,0,0.55)" stroke-width="1.2"/></svg><div style="position:absolute;left:315.2px;top:635.2px;line-height:14px;font-size:8.4px;color:#dff2ec;white-space:nowrap;">Geometry to Instance</div><div style="position:absolute;left:280.3px;width:120px;text-align:right;top:652.5px;line-height:14px;font-size:8.3px;color:#e8e8e8;white-space:nowrap;">Instances</div><svg width="12" height="12" style="position:absolute;left:402.8px;top:653.5px"><circle cx="6" cy="6" r="3.2" fill="#1ed3a0" stroke="#1a1a1a" stroke-width="0.9"/></svg><div style="position:absolute;left:304.2px;top:670.4px;line-height:14px;font-size:8.3px;color:#e8e8e8;white-space:nowrap;">Geometry</div><svg width="10" height="18" style="position:absolute;left:291.7px;top:668px"><rect x="2.5" y="2.5" width="5" height="13" rx="2.5" fill="#1ed3a0" stroke="#1a1a1a" stroke-width="0.9"/></svg><div style="position:absolute;left:301px;top:710.8px;width:98px;height:51.200000000000045px;background:#666666;border-radius:4px;box-shadow:0 0 0 1px #151515, 0 2px 4px rgba(0,0,0,0.5)"></div><div style="position:absolute;left:301px;top:710.8px;width:98px;height:14.400000000000091px;background:#a84f68;border-radius:4px 4px 0 0;border-bottom:1px solid rgba(0,0,0,0.45)"></div><svg width="10" height="8" style="position:absolute;left:308px;top:715.0px"><polyline points="1.5,1.5 4.5,4.5 7.5,1.5" fill="none" stroke="rgba(0,0,0,0.55)" stroke-width="1.2"/></svg><div style="position:absolute;left:319px;top:711.0px;line-height:14px;font-size:8.4px;color:#f6dce6;white-space:nowrap;">Integer</div><div style="position:absolute;left:270.5px;width:120px;text-align:right;top:728.3px;line-height:14px;font-size:8.3px;color:#e8e8e8;white-space:nowrap;">Integer</div><svg width="12" height="12" style="position:absolute;left:393px;top:729.3px"><circle cx="6" cy="6" r="3.2" fill="#5f9a64" stroke="#1a1a1a" stroke-width="0.9"/></svg><div style="position:absolute;left:308.6px;top:747.8px;width:82.39999999999998px;height:12.200000000000045px;background:#dcdcdc;border-radius:3px"></div><div style="position:absolute;left:323px;width:60px;text-align:right;top:746.9px;line-height:14px;font-size:8.3px;color:#222;white-space:nowrap;"></div><div style="position:absolute;left:329.8px;top:747.0px;width:40px;text-align:center;line-height:14px;font-size:8.3px;color:#222;white-space:nowrap;">64</div><div style="position:absolute;left:442.3px;top:635.6px;width:97.49999999999994px;height:114.79999999999995px;background:#666666;border-radius:4px;box-shadow:0 0 0 1px #151515, 0 2px 4px rgba(0,0,0,0.5)"></div><div style="position:absolute;left:442.3px;top:635.6px;width:97.49999999999994px;height:13.799999999999955px;background:#3d9b83;border-radius:4px 4px 0 0;border-bottom:1px solid rgba(0,0,0,0.45)"></div><svg width="10" height="8" style="position:absolute;left:449.3px;top:639.5px"><polyline points="1.5,1.5 4.5,4.5 7.5,1.5" fill="none" stroke="rgba(0,0,0,0.55)" stroke-width="1.2"/></svg><div style="position:absolute;left:460.3px;top:635.5px;line-height:14px;font-size:8.4px;color:#dff2ec;white-space:nowrap;">Duplicate Elements</div><div style="position:absolute;left:411.29999999999995px;width:120px;text-align:right;top:653.3px;line-height:14px;font-size:8.3px;color:#e8e8e8;white-space:nowrap;">Geometry</div><svg width="12" height="12" style="position:absolute;left:533.8px;top:654.3px"><circle cx="6" cy="6" r="3.2" fill="#1ed3a0" stroke="#1a1a1a" stroke-width="0.9"/></svg><div style="position:absolute;left:411.29999999999995px;width:120px;text-align:right;top:668.5px;line-height:14px;font-size:8.3px;color:#e8e8e8;white-space:nowrap;">Duplicate Index</div><svg width="12" height="12" style="position:absolute;left:533.8px;top:669.5px"><polygon points="6,2.2 9.8,6 6,9.8 2.2,6" fill="#5f9a64" stroke="#1a1a1a" stroke-width="0.9"/></svg><div style="position:absolute;left:449.4px;top:687.4px;width:84.60000000000002px;height:13.899999999999977px;background:#393939;border-radius:3px;box-shadow:0 1px 1px rgba(0,0,0,0.3)"></div><div style="position:absolute;left:455.4px;top:687.3499999999999px;line-height:14px;font-size:8.3px;color:#e0e0e0;white-space:nowrap;">Instance</div><svg width="8" height="6" style="position:absolute;left:524px;top:692.3499999999999px"><polyline points="1,1 3.5,3.5 6,1" fill="none" stroke="#aaa" stroke-width="0.9"/></svg><div style="position:absolute;left:450.3px;top:703.6px;line-height:14px;font-size:8.3px;color:#e8e8e8;white-space:nowrap;">Geometry</div><svg width="12" height="12" style="position:absolute;left:436.3px;top:704.6px"><circle cx="6" cy="6" r="3.2" fill="#1ed3a0" stroke="#1a1a1a" stroke-width="0.9"/></svg><div style="position:absolute;left:450.3px;top:718.5px;line-height:14px;font-size:8.3px;color:#e8e8e8;white-space:nowrap;">Selection</div><svg width="12" height="12" style="position:absolute;left:436.3px;top:719.5px"><polygon points="6,2.3 9.7,6 6,9.7 2.3,6" fill="#222" stroke="#d0a8dc" stroke-width="1.3"/><circle cx="6" cy="6" r="0.9" fill="#d0a8dc"/></svg><div style="position:absolute;left:450.3px;top:734.0px;line-height:14px;font-size:8.3px;color:#e8e8e8;white-space:nowrap;">Amount</div><svg width="12" height="12" style="position:absolute;left:436.3px;top:735px"><polygon points="6,2.3 9.7,6 6,9.7 2.3,6" fill="#222" stroke="#5f9a64" stroke-width="1.3"/><circle cx="6" cy="6" r="0.9" fill="#5f9a64"/></svg><div style="position:absolute;left:444px;top:763.2px;width:98px;height:102.29999999999995px;background:#666666;border-radius:4px;box-shadow:0 0 0 1px #151515, 0 2px 4px rgba(0,0,0,0.5)"></div><div style="position:absolute;left:444px;top:763.2px;width:98px;height:14.099999999999909px;background:#3a82ab;border-radius:4px 4px 0 0;border-bottom:1px solid rgba(0,0,0,0.45)"></div><svg width="10" height="8" style="position:absolute;left:451px;top:767.25px"><polyline points="1.5,1.5 4.5,4.5 7.5,1.5" fill="none" stroke="rgba(0,0,0,0.55)" stroke-width="1.2"/></svg><div style="position:absolute;left:462px;top:763.25px;line-height:14px;font-size:8.4px;color:#dcecf6;white-space:nowrap;">Divide</div><div style="position:absolute;left:413.5px;width:120px;text-align:right;top:780.0px;line-height:14px;font-size:8.3px;color:#e8e8e8;white-space:nowrap;">Value</div><svg width="12" height="12" style="position:absolute;left:536px;top:781px"><polygon points="6,2.3 9.7,6 6,9.7 2.3,6" fill="#222" stroke="#dcdcdc" stroke-width="1.3"/><circle cx="6" cy="6" r="0.9" fill="#dcdcdc"/></svg><div style="position:absolute;left:450.5px;top:799px;width:85.0px;height:14px;background:#393939;border-radius:3px;box-shadow:0 1px 1px rgba(0,0,0,0.3)"></div><div style="position:absolute;left:456.5px;top:799.0px;line-height:14px;font-size:8.3px;color:#e0e0e0;white-space:nowrap;">Divide</div><svg width="8" height="6" style="position:absolute;left:525.5px;top:804.0px"><polyline points="1,1 3.5,3.5 6,1" fill="none" stroke="#aaa" stroke-width="0.9"/></svg><div style="position:absolute;left:450.5px;top:818.8px;width:11px;height:11px;background:#484848;border-radius:2px"></div><div style="position:absolute;left:464.5px;top:817.3px;line-height:14px;font-size:8.3px;color:#2c2c2c;white-space:nowrap;">Clamp</div><div style="position:absolute;left:452px;top:832.2px;line-height:14px;font-size:8.3px;color:#e8e8e8;white-space:nowrap;">Value</div><svg width="12" height="12" style="position:absolute;left:438px;top:833.2px"><polygon points="6,2.3 9.7,6 6,9.7 2.3,6" fill="#222" stroke="#dcdcdc" stroke-width="1.3"/><circle cx="6" cy="6" r="0.9" fill="#dcdcdc"/></svg><div style="position:absolute;left:450.5px;top:849px;width:85.0px;height:12px;background:#dcdcdc;border-radius:3px"></div><div style="position:absolute;left:457.5px;top:848.0px;line-height:14px;font-size:8.3px;color:#222;white-space:nowrap;">Value</div><div style="position:absolute;left:467.5px;width:60px;text-align:right;top:848.0px;line-height:14px;font-size:8.3px;color:#222;white-space:nowrap;">4.250</div><svg width="12" height="12" style="position:absolute;left:438px;top:849px"><polygon points="6,2.3 9.7,6 6,9.7 2.3,6" fill="#222" stroke="#dcdcdc" stroke-width="1.3"/><circle cx="6" cy="6" r="0.9" fill="#dcdcdc"/></svg><div style="position:absolute;left:560.9px;top:708px;width:97.60000000000002px;height:103.20000000000005px;background:#666666;border-radius:4px;box-shadow:0 0 0 1px #151515, 0 2px 4px rgba(0,0,0,0.5)"></div><div style="position:absolute;left:560.9px;top:708px;width:97.60000000000002px;height:14px;background:#3a82ab;border-radius:4px 4px 0 0;border-bottom:1px solid rgba(0,0,0,0.45)"></div><svg width="10" height="8" style="position:absolute;left:567.9px;top:712.0px"><polyline points="1.5,1.5 4.5,4.5 7.5,1.5" fill="none" stroke="rgba(0,0,0,0.55)" stroke-width="1.2"/></svg><div style="position:absolute;left:578.9px;top:708.0px;line-height:14px;font-size:8.4px;color:#dcecf6;white-space:nowrap;">Divide</div><div style="position:absolute;left:530.0px;width:120px;text-align:right;top:725.3px;line-height:14px;font-size:8.3px;color:#e8e8e8;white-space:nowrap;">Value</div><svg width="12" height="12" style="position:absolute;left:652.5px;top:726.3px"><polygon points="6,2.2 9.8,6 6,9.8 2.2,6" fill="#a8a8a8" stroke="#1a1a1a" stroke-width="0.9"/></svg><div style="position:absolute;left:567.4px;top:744px;width:84.60000000000002px;height:13.600000000000023px;background:#393939;border-radius:3px;box-shadow:0 1px 1px rgba(0,0,0,0.3)"></div><div style="position:absolute;left:573.4px;top:743.8px;line-height:14px;font-size:8.3px;color:#e0e0e0;white-space:nowrap;">Divide</div><svg width="8" height="6" style="position:absolute;left:642.0px;top:748.8px"><polyline points="1,1 3.5,3.5 6,1" fill="none" stroke="#aaa" stroke-width="0.9"/></svg><div style="position:absolute;left:567.4px;top:763.7px;width:11px;height:11px;background:#484848;border-radius:2px"></div><div style="position:absolute;left:581.4px;top:762.2px;line-height:14px;font-size:8.3px;color:#2c2c2c;white-space:nowrap;">Clamp</div><div style="position:absolute;left:568.9px;top:777.2px;line-height:14px;font-size:8.3px;color:#e8e8e8;white-space:nowrap;">Value</div><svg width="12" height="12" style="position:absolute;left:554.9px;top:778.2px"><polygon points="6,2.2 9.8,6 6,9.8 2.2,6" fill="#a8a8a8" stroke="#1a1a1a" stroke-width="0.9"/></svg><div style="position:absolute;left:568.9px;top:793.0px;line-height:14px;font-size:8.3px;color:#e8e8e8;white-space:nowrap;">Value</div><svg width="12" height="12" style="position:absolute;left:554.9px;top:794px"><polygon points="6,2.3 9.7,6 6,9.7 2.3,6" fill="#222" stroke="#dcdcdc" stroke-width="1.3"/><circle cx="6" cy="6" r="0.9" fill="#dcdcdc"/></svg><div style="position:absolute;left:679.5px;top:706.7px;width:97.79999999999995px;height:103.29999999999995px;background:#666666;border-radius:4px;box-shadow:0 0 0 1px #151515, 0 2px 4px rgba(0,0,0,0.5)"></div><div style="position:absolute;left:679.5px;top:706.7px;width:97.79999999999995px;height:13.799999999999955px;background:#3a82ab;border-radius:4px 4px 0 0;border-bottom:1px solid rgba(0,0,0,0.45)"></div><svg width="10" height="8" style="position:absolute;left:686.5px;top:710.6px"><polyline points="1.5,1.5 4.5,4.5 7.5,1.5" fill="none" stroke="rgba(0,0,0,0.55)" stroke-width="1.2"/></svg><div style="position:absolute;left:697.5px;top:706.6px;line-height:14px;font-size:8.4px;color:#dcecf6;white-space:nowrap;">Power</div><div style="position:absolute;left:648.8px;width:120px;text-align:right;top:724.3px;line-height:14px;font-size:8.3px;color:#e8e8e8;white-space:nowrap;">Value</div><svg width="12" height="12" style="position:absolute;left:771.3px;top:725.3px"><polygon points="6,2.2 9.8,6 6,9.8 2.2,6" fill="#a8a8a8" stroke="#1a1a1a" stroke-width="0.9"/></svg><div style="position:absolute;left:686.0px;top:743px;width:84.79999999999995px;height:14px;background:#393939;border-radius:3px;box-shadow:0 1px 1px rgba(0,0,0,0.3)"></div><div style="position:absolute;left:692.0px;top:743.0px;line-height:14px;font-size:8.3px;color:#e0e0e0;white-space:nowrap;">Power</div><svg width="8" height="6" style="position:absolute;left:760.8px;top:748.0px"><polyline points="1,1 3.5,3.5 6,1" fill="none" stroke="#aaa" stroke-width="0.9"/></svg><div style="position:absolute;left:686.0px;top:762.7px;width:11px;height:11px;background:#484848;border-radius:2px"></div><div style="position:absolute;left:700.0px;top:761.2px;line-height:14px;font-size:8.3px;color:#2c2c2c;white-space:nowrap;">Clamp</div><div style="position:absolute;left:687.5px;top:776.5px;line-height:14px;font-size:8.3px;color:#e8e8e8;white-space:nowrap;">Base</div><svg width="12" height="12" style="position:absolute;left:673.5px;top:777.5px"><polygon points="6,2.2 9.8,6 6,9.8 2.2,6" fill="#a8a8a8" stroke="#1a1a1a" stroke-width="0.9"/></svg><div style="position:absolute;left:686.0px;top:792px;width:84.79999999999995px;height:12px;background:#dcdcdc;border-radius:3px"></div><div style="position:absolute;left:693.0px;top:791.0px;line-height:14px;font-size:8.3px;color:#222;white-space:nowrap;">Exponent</div><div style="position:absolute;left:702.8px;width:60px;text-align:right;top:791.0px;line-height:14px;font-size:8.3px;color:#222;white-space:nowrap;">2.500</div><svg width="12" height="12" style="position:absolute;left:673.5px;top:792px"><polygon points="6,2.3 9.7,6 6,9.7 2.3,6" fill="#222" stroke="#dcdcdc" stroke-width="1.3"/><circle cx="6" cy="6" r="0.9" fill="#dcdcdc"/></svg><div style="position:absolute;left:804.4px;top:705.5px;width:99.10000000000002px;height:104.5px;background:#666666;border-radius:4px;box-shadow:0 0 0 1.2px #f2f2f2, 0 1px 3px rgba(0,0,0,0.6)"></div><div style="position:absolute;left:804.4px;top:705.5px;width:99.10000000000002px;height:15.0px;background:#3a82ab;border-radius:4px 4px 0 0;border-bottom:1px solid rgba(0,0,0,0.45)"></div><svg width="10" height="8" style="position:absolute;left:811.4px;top:710.0px"><polyline points="1.5,1.5 4.5,4.5 7.5,1.5" fill="none" stroke="rgba(0,0,0,0.55)" stroke-width="1.2"/></svg><div style="position:absolute;left:822.4px;top:706.0px;line-height:14px;font-size:8.4px;color:#dcecf6;white-space:nowrap;">Add</div><div style="position:absolute;left:775.0px;width:120px;text-align:right;top:723.0px;line-height:14px;font-size:8.3px;color:#e8e8e8;white-space:nowrap;">Value</div><svg width="12" height="12" style="position:absolute;left:897.5px;top:724px"><polygon points="6,2.2 9.8,6 6,9.8 2.2,6" fill="#a8a8a8" stroke="#1a1a1a" stroke-width="0.9"/></svg><div style="position:absolute;left:810.9px;top:742px;width:86.10000000000002px;height:14px;background:#393939;border-radius:3px;box-shadow:0 1px 1px rgba(0,0,0,0.3)"></div><div style="position:absolute;left:816.9px;top:742.0px;line-height:14px;font-size:8.3px;color:#e0e0e0;white-space:nowrap;">Add</div><svg width="8" height="6" style="position:absolute;left:887.0px;top:747.0px"><polyline points="1,1 3.5,3.5 6,1" fill="none" stroke="#aaa" stroke-width="0.9"/></svg><div style="position:absolute;left:810.9px;top:761.7px;width:11px;height:11px;background:#484848;border-radius:2px"></div><div style="position:absolute;left:824.9px;top:760.2px;line-height:14px;font-size:8.3px;color:#2c2c2c;white-space:nowrap;">Clamp</div><div style="position:absolute;left:812.4px;top:775.2px;line-height:14px;font-size:8.3px;color:#e8e8e8;white-space:nowrap;">Value</div><svg width="12" height="12" style="position:absolute;left:798.4px;top:776.2px"><polygon points="6,2.2 9.8,6 6,9.8 2.2,6" fill="#a8a8a8" stroke="#1a1a1a" stroke-width="0.9"/></svg><div style="position:absolute;left:810.9px;top:792px;width:86.10000000000002px;height:12px;background:#dcdcdc;border-radius:3px"></div><div style="position:absolute;left:817.9px;top:791.0px;line-height:14px;font-size:8.3px;color:#222;white-space:nowrap;">Value</div><div style="position:absolute;left:829.0px;width:60px;text-align:right;top:791.0px;line-height:14px;font-size:8.3px;color:#222;white-space:nowrap;">3.700</div><svg width="12" height="12" style="position:absolute;left:798.4px;top:792px"><polygon points="6,2.3 9.7,6 6,9.7 2.3,6" fill="#222" stroke="#dcdcdc" stroke-width="1.3"/><circle cx="6" cy="6" r="0.9" fill="#dcdcdc"/></svg><div style="position:absolute;left:924px;top:628.8px;width:98px;height:156.20000000000005px;background:#666666;border-radius:4px;box-shadow:0 0 0 1px #151515, 0 2px 4px rgba(0,0,0,0.5)"></div><div style="position:absolute;left:924px;top:628.8px;width:98px;height:13.200000000000045px;background:#3d9b83;border-radius:4px 4px 0 0;border-bottom:1px solid rgba(0,0,0,0.45)"></div><svg width="10" height="8" style="position:absolute;left:931px;top:632.4px"><polyline points="1.5,1.5 4.5,4.5 7.5,1.5" fill="none" stroke="rgba(0,0,0,0.55)" stroke-width="1.2"/></svg><div style="position:absolute;left:942px;top:628.4px;line-height:14px;font-size:8.4px;color:#dff2ec;white-space:nowrap;">Scale Instances</div><div style="position:absolute;left:893.5px;width:120px;text-align:right;top:646.6px;line-height:14px;font-size:8.3px;color:#e8e8e8;white-space:nowrap;">Instances</div><svg width="12" height="12" style="position:absolute;left:1016px;top:647.6px"><circle cx="6" cy="6" r="3.2" fill="#1ed3a0" stroke="#1a1a1a" stroke-width="0.9"/></svg><div style="position:absolute;left:932px;top:664.3px;line-height:14px;font-size:8.3px;color:#e8e8e8;white-space:nowrap;">Instances</div><svg width="12" height="12" style="position:absolute;left:918px;top:665.3px"><circle cx="6" cy="6" r="3.2" fill="#1ed3a0" stroke="#1a1a1a" stroke-width="0.9"/></svg><div style="position:absolute;left:932px;top:679.4px;line-height:14px;font-size:8.3px;color:#e8e8e8;white-space:nowrap;">Selection</div><svg width="12" height="12" style="position:absolute;left:918px;top:680.4px"><polygon points="6,2.3 9.7,6 6,9.7 2.3,6" fill="#222" stroke="#d0a8dc" stroke-width="1.3"/><circle cx="6" cy="6" r="0.9" fill="#d0a8dc"/></svg><div style="position:absolute;left:932px;top:694.4px;line-height:14px;font-size:8.3px;color:#e8e8e8;white-space:nowrap;">Scale</div><svg width="12" height="12" style="position:absolute;left:918px;top:695.4px"><polygon points="6,2.2 9.8,6 6,9.8 2.2,6" fill="#6a6ad0" stroke="#1a1a1a" stroke-width="0.9"/></svg><div style="position:absolute;left:932px;top:710.2px;line-height:14px;font-size:8.3px;color:#e8e8e8;white-space:nowrap;">Center:</div><svg width="12" height="12" style="position:absolute;left:918px;top:711.2px"><polygon points="6,2.3 9.7,6 6,9.7 2.3,6" fill="#222" stroke="#6a6ad0" stroke-width="1.3"/><circle cx="6" cy="6" r="0.9" fill="#6a6ad0"/></svg><div style="position:absolute;left:932px;top:725px;width:82px;height:12px;background:#dcdcdc;border-radius:3px 3px 0 0"></div><div style="position:absolute;left:942px;top:724.0px;line-height:14px;font-size:8.3px;color:#222;white-space:nowrap;">X</div><div style="position:absolute;left:944px;width:60px;text-align:right;top:724.0px;line-height:14px;font-size:8.3px;color:#222;white-space:nowrap;">0 mm</div><div style="position:absolute;left:932px;top:738px;width:82px;height:12px;background:#dcdcdc;border-radius:0"></div><div style="position:absolute;left:942px;top:737.0px;line-height:14px;font-size:8.3px;color:#222;white-space:nowrap;">Y</div><div style="position:absolute;left:944px;width:60px;text-align:right;top:737.0px;line-height:14px;font-size:8.3px;color:#222;white-space:nowrap;">0 mm</div><div style="position:absolute;left:932px;top:751px;width:82px;height:13px;background:#dcdcdc;border-radius:0 0 3px 3px"></div><div style="position:absolute;left:942px;top:750.5px;line-height:14px;font-size:8.3px;color:#222;white-space:nowrap;">Z</div><div style="position:absolute;left:944px;width:60px;text-align:right;top:750.5px;line-height:14px;font-size:8.3px;color:#222;white-space:nowrap;">0 mm</div><div style="position:absolute;left:932px;top:770.45px;width:9.5px;height:9.5px;background:#5680c2;border-radius:2px"><svg width="9.5" height="9.5" viewBox="0 0 10 10"><polyline points="2,5.2 4.2,7.6 8.2,2.4" fill="none" stroke="#fff" stroke-width="1.3"/></svg></div><div style="position:absolute;left:943.5px;top:768.2px;line-height:14px;font-size:8.3px;color:#2a2a2a;white-space:nowrap;">Local Space</div><svg width="12" height="12" style="position:absolute;left:918px;top:769.2px"><polygon points="6,2.3 9.7,6 6,9.7 2.3,6" fill="#222" stroke="#d0a8dc" stroke-width="1.3"/><circle cx="6" cy="6" r="0.9" fill="#d0a8dc"/></svg><div style="position:absolute;left:1041px;top:628.8px;width:97.5px;height:52.200000000000045px;background:#666666;border-radius:4px;box-shadow:0 0 0 1px #151515, 0 2px 4px rgba(0,0,0,0.5)"></div><div style="position:absolute;left:1041px;top:628.8px;width:97.5px;height:13.200000000000045px;background:#3d9b83;border-radius:4px 4px 0 0;border-bottom:1px solid rgba(0,0,0,0.45)"></div><svg width="10" height="8" style="position:absolute;left:1048px;top:632.4px"><polyline points="1.5,1.5 4.5,4.5 7.5,1.5" fill="none" stroke="rgba(0,0,0,0.55)" stroke-width="1.2"/></svg><div style="position:absolute;left:1059px;top:628.4px;line-height:14px;font-size:8.4px;color:#dff2ec;white-space:nowrap;">Realize Instances</div><div style="position:absolute;left:1010.0px;width:120px;text-align:right;top:646.6px;line-height:14px;font-size:8.3px;color:#e8e8e8;white-space:nowrap;">Geometry</div><svg width="12" height="12" style="position:absolute;left:1132.5px;top:647.6px"><circle cx="6" cy="6" r="3.2" fill="#1ed3a0" stroke="#1a1a1a" stroke-width="0.9"/></svg><div style="position:absolute;left:1049px;top:664.3px;line-height:14px;font-size:8.3px;color:#e8e8e8;white-space:nowrap;">Geometry</div><svg width="12" height="12" style="position:absolute;left:1035px;top:665.3px"><circle cx="6" cy="6" r="3.2" fill="#1ed3a0" stroke="#1a1a1a" stroke-width="0.9"/></svg><div style="position:absolute;left:1175.6px;top:628.2px;width:97.60000000000014px;height:99.79999999999995px;background:#666666;border-radius:4px;box-shadow:0 0 0 1px #151515, 0 2px 4px rgba(0,0,0,0.5)"></div><div style="position:absolute;left:1175.6px;top:628.2px;width:97.60000000000014px;height:14.0px;background:#3d9b83;border-radius:4px 4px 0 0;border-bottom:1px solid rgba(0,0,0,0.45)"></div><svg width="10" height="8" style="position:absolute;left:1182.6px;top:632.2px"><polyline points="1.5,1.5 4.5,4.5 7.5,1.5" fill="none" stroke="rgba(0,0,0,0.55)" stroke-width="1.2"/></svg><div style="position:absolute;left:1193.6px;top:628.2px;line-height:14px;font-size:8.4px;color:#dff2ec;white-space:nowrap;">Set Shade Smooth</div><div style="position:absolute;left:1144.7px;width:120px;text-align:right;top:645.5px;line-height:14px;font-size:8.3px;color:#e8e8e8;white-space:nowrap;">Geometry</div><svg width="12" height="12" style="position:absolute;left:1267.2px;top:646.5px"><circle cx="6" cy="6" r="3.2" fill="#1ed3a0" stroke="#1a1a1a" stroke-width="0.9"/></svg><div style="position:absolute;left:1182.5px;top:664.7px;width:83.8px;height:12.8px;background:#3d3d3d;border-radius:3px;overflow:hidden"><div style="position:absolute;left:41.1px;top:0px;width:42.7px;height:12.8px;background:#5680c2"></div><div style="position:absolute;left:0.0px;top:-0.5999999999999996px;width:41px;text-align:center;line-height:14px;font-size:8.3px;color:#e0e0e0;white-space:nowrap;">Edge</div><div style="position:absolute;left:41.5px;top:-0.5999999999999996px;width:42px;text-align:center;line-height:14px;font-size:8.3px;color:#f0f0f0;white-space:nowrap;">Face</div></div><div style="position:absolute;left:1183.6px;top:680.2px;line-height:14px;font-size:8.3px;color:#e8e8e8;white-space:nowrap;">Geometry</div><svg width="12" height="12" style="position:absolute;left:1169.6px;top:681.2px"><circle cx="6" cy="6" r="3.2" fill="#1ed3a0" stroke="#1a1a1a" stroke-width="0.9"/></svg><div style="position:absolute;left:1183.6px;top:695.3px;line-height:14px;font-size:8.3px;color:#e8e8e8;white-space:nowrap;">Selection</div><svg width="12" height="12" style="position:absolute;left:1169.6px;top:696.3px"><polygon points="6,2.3 9.7,6 6,9.7 2.3,6" fill="#222" stroke="#d0a8dc" stroke-width="1.3"/><circle cx="6" cy="6" r="0.9" fill="#d0a8dc"/></svg><div style="position:absolute;left:1182.5px;top:713.25px;width:9.5px;height:9.5px;background:#5680c2;border-radius:2px"><svg width="9.5" height="9.5" viewBox="0 0 10 10"><polyline points="2,5.2 4.2,7.6 8.2,2.4" fill="none" stroke="#fff" stroke-width="1.3"/></svg></div><div style="position:absolute;left:1194px;top:711.0px;line-height:14px;font-size:8.3px;color:#2a2a2a;white-space:nowrap;">Shade Smooth</div><svg width="12" height="12" style="position:absolute;left:1169.6px;top:712px"><polygon points="6,2.3 9.7,6 6,9.7 2.3,6" fill="#222" stroke="#d0a8dc" stroke-width="1.3"/><circle cx="6" cy="6" r="0.9" fill="#d0a8dc"/></svg><div style="position:absolute;left:1306px;top:629.5px;width:98px;height:82.5px;background:#666666;border-radius:4px;box-shadow:0 0 0 1px #151515, 0 2px 4px rgba(0,0,0,0.5)"></div><div style="position:absolute;left:1306px;top:629.5px;width:98px;height:14.0px;background:#3d9b83;border-radius:4px 4px 0 0;border-bottom:1px solid rgba(0,0,0,0.45)"></div><svg width="10" height="8" style="position:absolute;left:1313px;top:633.5px"><polyline points="1.5,1.5 4.5,4.5 7.5,1.5" fill="none" stroke="rgba(0,0,0,0.55)" stroke-width="1.2"/></svg><div style="position:absolute;left:1324px;top:629.5px;line-height:14px;font-size:8.4px;color:#dff2ec;white-space:nowrap;">Set Material</div><div style="position:absolute;left:1275.5px;width:120px;text-align:right;top:647.0px;line-height:14px;font-size:8.3px;color:#e8e8e8;white-space:nowrap;">Geometry</div><svg width="12" height="12" style="position:absolute;left:1398px;top:648px"><circle cx="6" cy="6" r="3.2" fill="#1ed3a0" stroke="#1a1a1a" stroke-width="0.9"/></svg><div style="position:absolute;left:1314px;top:664.0px;line-height:14px;font-size:8.3px;color:#e8e8e8;white-space:nowrap;">Geometry</div><svg width="12" height="12" style="position:absolute;left:1300px;top:665px"><circle cx="6" cy="6" r="3.2" fill="#1ed3a0" stroke="#1a1a1a" stroke-width="0.9"/></svg><div style="position:absolute;left:1314px;top:680.2px;line-height:14px;font-size:8.3px;color:#e8e8e8;white-space:nowrap;">Selection</div><svg width="12" height="12" style="position:absolute;left:1300px;top:681.2px"><polygon points="6,2.3 9.7,6 6,9.7 2.3,6" fill="#222" stroke="#d0a8dc" stroke-width="1.3"/><circle cx="6" cy="6" r="0.9" fill="#d0a8dc"/></svg><div style="position:absolute;left:1314px;top:695.3px;line-height:14px;font-size:8.3px;color:#e8e8e8;white-space:nowrap;">Material</div><svg width="12" height="12" style="position:absolute;left:1300px;top:696.3px"><circle cx="6" cy="6" r="3.2" fill="#f07a88" stroke="#1a1a1a" stroke-width="0.9"/></svg><div style="position:absolute;left:1169px;top:752.2px;width:98px;height:64.79999999999995px;background:#666666;border-radius:4px;box-shadow:0 0 0 1px #151515, 0 2px 4px rgba(0,0,0,0.5)"></div><div style="position:absolute;left:1169px;top:752.2px;width:98px;height:13.5px;background:#3d3d3d;border-radius:4px 4px 0 0;border-bottom:1px solid rgba(0,0,0,0.45)"></div><svg width="10" height="8" style="position:absolute;left:1176px;top:755.95px"><polyline points="1.5,1.5 4.5,4.5 7.5,1.5" fill="none" stroke="rgba(0,0,0,0.55)" stroke-width="1.2"/></svg><div style="position:absolute;left:1187px;top:751.95px;line-height:14px;font-size:8.4px;color:#f0f0f0;white-space:nowrap;">Group Input</div><div style="position:absolute;left:1138.5px;width:120px;text-align:right;top:769.0px;line-height:14px;font-size:8.3px;color:#e8e8e8;white-space:nowrap;">Geometry</div><svg width="12" height="12" style="position:absolute;left:1261px;top:770px"><circle cx="6" cy="6" r="3.2" fill="#1ed3a0" stroke="#1a1a1a" stroke-width="0.9"/></svg><div style="position:absolute;left:1138.5px;width:120px;text-align:right;top:784.3px;line-height:14px;font-size:8.3px;color:#e8e8e8;white-space:nowrap;">Material</div><svg width="12" height="12" style="position:absolute;left:1261px;top:785.3px"><circle cx="6" cy="6" r="3.2" fill="#f07a88" stroke="#1a1a1a" stroke-width="0.9"/></svg><svg width="12" height="12" style="position:absolute;left:1261px;top:800.7px"><circle cx="6" cy="6" r="3.2" fill="#3a3a3a" stroke="#858585" stroke-width="0.9"/></svg></div>
</body></html>
